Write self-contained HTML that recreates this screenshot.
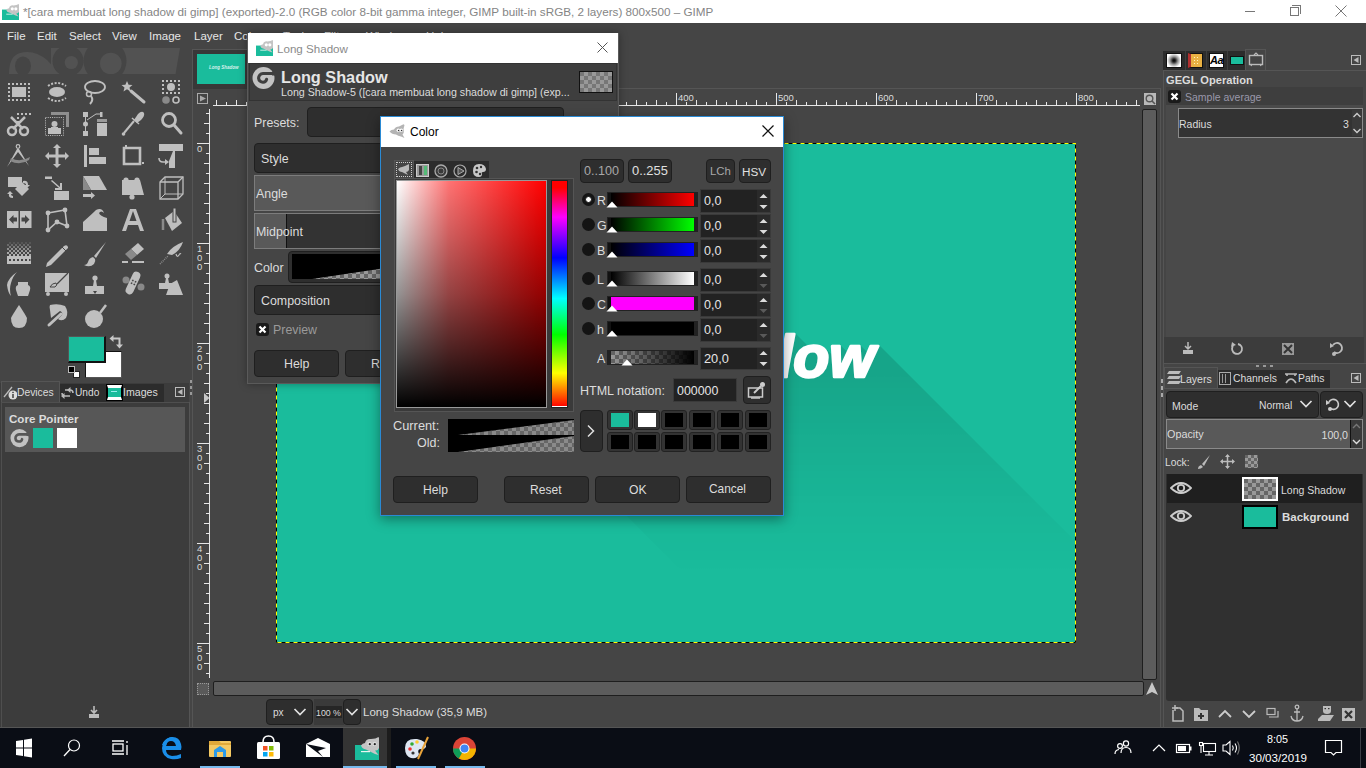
<!DOCTYPE html>
<html><head><meta charset="utf-8">
<style>
*{margin:0;padding:0;box-sizing:border-box}
html,body{width:1366px;height:768px;overflow:hidden;background:#454545;font-family:"Liberation Sans",sans-serif;font-size:12px;color:#dcdcdc}
.a{position:absolute}
.t{position:absolute;white-space:nowrap;line-height:1}
.chk{background-color:#666;background-image:linear-gradient(45deg,#999 25%,transparent 25%,transparent 75%,#999 75%),linear-gradient(45deg,#999 25%,transparent 25%,transparent 75%,#999 75%);background-size:8px 8px;background-position:0 0,4px 4px}
.btn{position:absolute;background:#2c2c2c;border:1px solid #1f1f1f;border-radius:4px}
</style></head><body>
<!-- ============ TITLE + MENU ============ -->
<div class="a" style="left:0px;top:0px;width:1366px;height:23px;background:#fff"></div>
<svg class="a" style="left:2px;top:4px" width="17" height="16" viewBox="0 0 24 23" preserveAspectRatio="none"><rect x="0" y="8" width="24" height="15" fill="#1abc9c"/><path d="M6 8.5 Q7.5 6 10 6 Q11 1.5 16 2 Q21 2 23.5 0 L24 1 V11 Q23 14 20 13.5 L23.5 18 L20 17 Q15 14.5 11 12.5 Q7 12 6 8.5Z" fill="#c4c4c4"/><circle cx="14.5" cy="7" r="2.2" fill="#fff"/><circle cx="19.5" cy="7" r="2.2" fill="#fff"/><rect x="6" y="14" width="9" height="1.2" fill="#e8f6f2"/></svg>
<div class="t" style="left:23px;top:6.20px;font-size:11.7px;color:#858585">*[cara membuat long shadow di gimp] (exported)-2.0 (RGB color 8-bit gamma integer, GIMP built-in sRGB, 2 layers) 800x500 – GIMP</div>
<div class="a" style="left:1245px;top:11px;width:10px;height:1px;background:#777"></div>
<div class="a" style="left:1290px;top:7px;width:9px;height:9px;border:1px solid #777;background:#fff"></div>
<div class="a" style="left:1292px;top:5px;width:9px;height:9px;border-top:1px solid #777;border-right:1px solid #777"></div>
<svg class="a" style="left:1335px;top:5px" width="12" height="12"><path d="M0.5 0.5 L11.5 11.5 M11.5 0.5 L0.5 11.5" stroke="#777" stroke-width="1"/></svg>
<div class="a" style="left:0px;top:23px;width:1366px;height:25px;background:#454545"></div>
<div class="t" style="left:7px;top:30.67px;font-size:11.5px;color:#e6e6e6">File</div>
<div class="t" style="left:37px;top:30.67px;font-size:11.5px;color:#e6e6e6">Edit</div>
<div class="t" style="left:69px;top:30.67px;font-size:11.5px;color:#e6e6e6">Select</div>
<div class="t" style="left:112px;top:30.67px;font-size:11.5px;color:#e6e6e6">View</div>
<div class="t" style="left:149px;top:30.67px;font-size:11.5px;color:#e6e6e6">Image</div>
<div class="t" style="left:194px;top:30.67px;font-size:11.5px;color:#e6e6e6">Layer</div>
<div class="t" style="left:234px;top:30.67px;font-size:11.5px;color:#e6e6e6">Colors</div>
<div class="t" style="left:283px;top:30.67px;font-size:11.5px;color:#e6e6e6">Tools</div>
<div class="t" style="left:324px;top:30.67px;font-size:11.5px;color:#e6e6e6">Filters</div>
<div class="t" style="left:366px;top:30.67px;font-size:11.5px;color:#e6e6e6">Windows</div>
<div class="t" style="left:426px;top:30.67px;font-size:11.5px;color:#e6e6e6">Help</div>
<!-- ============ TOOLBOX ============ -->
<div class="a" style="left:0;top:48px;width:189px;height:335px;background:#454545"></div>
<svg class="a" style="left:0;top:0" width="190" height="400" viewBox="0 0 190 400">
<defs><clipPath id="wm"><rect x="0" y="48" width="190" height="26"/></clipPath></defs>
<g clip-path="url(#wm)" fill="#525252">
 <path d="M51 48 H180 L175.5 74 H51Z"/>
 <path d="M9 74 Q9 56 20 53 Q34 49 47 60 L60 74Z"/>
 <ellipse cx="23" cy="66" rx="8" ry="9.5" fill="#454545"/>
 <circle cx="68" cy="61" r="15.5" fill="#454545"/>
 <circle cx="105" cy="61" r="21.5" fill="#454545"/>
 <circle cx="71.3" cy="62.5" r="6.6"/>
 <circle cx="110.8" cy="63.5" r="10.8"/>
</g>
<g fill="#bfbfbf" stroke="none">
 <!-- r1 c1 rect select -->
 <g><path d="M8 83h2v2h-2zM12 83h2v2h-2zM16 83h2v2h-2zM20 83h2v2h-2zM24 83h2v2h-2zM28 83h2v2h-2zM8 99h2v2h-2zM12 99h2v2h-2zM16 99h2v2h-2zM20 99h2v2h-2zM24 99h2v2h-2zM28 99h2v2h-2zM8 87h2v2h-2zM8 91h2v2h-2zM8 95h2v2h-2zM28 87h2v2h-2zM28 91h2v2h-2zM28 95h2v2h-2z"/><rect x="12" y="87" width="14" height="10"/></g>
 <!-- r1 c2 ellipse -->
 <ellipse cx="57" cy="92" rx="8" ry="5"/>
 <path d="M48 86 Q57 80 66 86" fill="none" stroke="#bfbfbf" stroke-width="2" stroke-dasharray="2 1.6"/>
 <path d="M48 98 Q57 104 66 98" fill="none" stroke="#bfbfbf" stroke-width="2" stroke-dasharray="2 1.6"/>
 <!-- r1 c3 lasso -->
 <ellipse cx="95" cy="87" rx="10" ry="6" fill="none" stroke="#bfbfbf" stroke-width="1.8"/>
 <circle cx="89" cy="94" r="2.5" fill="none" stroke="#bfbfbf" stroke-width="1.5"/>
 <path d="M91 96 Q94 100 90 104" fill="none" stroke="#bfbfbf" stroke-width="2"/>
 <!-- r1 c4 wand -->
 <path d="M127 81 L128.6 84.8 L132.5 85 L129.5 87.5 L130.5 91.5 L127 89.3 L123.5 91.5 L124.5 87.5 L121.5 85 L125.4 84.8Z"/>
 <path d="M131 91 L144 102" stroke="#bfbfbf" stroke-width="3" stroke-linecap="round"/>
 <!-- r1 c5 fuzzy select -->
 <path d="M162 80h2v2h-2zM166 80h2v2h-2zM170 80h2v2h-2zM174 80h2v2h-2zM178 80h2v2h-2zM162 92h2v2h-2zM166 92h2v2h-2zM170 92h2v2h-2zM174 92h2v2h-2zM178 92h2v2h-2zM162 84h2v2h-2zM162 88h2v2h-2zM178 84h2v2h-2zM178 88h2v2h-2z"/>
 <circle cx="171" cy="87" r="4"/>
 <circle cx="166" cy="100" r="3.8" fill="#8a8a8a"/>
 <circle cx="176" cy="100" r="3" fill="none" stroke="#bfbfbf" stroke-width="1.6"/>
 <!-- r2 c1 scissors -->
 <circle cx="12" cy="131" r="4" fill="none" stroke="#bfbfbf" stroke-width="2.5"/>
 <circle cx="24" cy="131" r="4" fill="none" stroke="#bfbfbf" stroke-width="2.5"/>
 <path d="M11 117 L23 129 M25 117 L13 129" stroke="#bfbfbf" stroke-width="2.5"/>
 <path d="M17 113h2v2h-2zM21 113h2v2h-2zM25 113h2v2h-2zM29 113h2v2h-2zM17 117h2v2h-2zM17 121h2v2h-2z"/>
 <!-- r2 c2 foreground select -->
 <path d="M51 112h18v15h-3v-12h-15z" fill="#8f8f8f"/>
 <rect x="45.5" y="117.5" width="18" height="18" fill="none" stroke="#bfbfbf" stroke-width="1" stroke-dasharray="1 1.2"/>
 <circle cx="54.5" cy="124" r="3"/>
 <path d="M48 128h3v-1h7v1h3v6h-13z"/>
 <!-- r2 c3 paths tool -->
 <rect x="83" y="112" width="5" height="5"/><rect x="83" y="131" width="5" height="5"/>
 <circle cx="85.5" cy="124" r="2.5"/>
 <path d="M85.5 114 V134" stroke="#bfbfbf" stroke-width="1"/>
 <path d="M87 120 L96 114 H101" fill="none" stroke="#bfbfbf" stroke-width="1"/>
 <rect x="100" y="112" width="2.5" height="5"/>
 <rect x="97" y="119" width="10" height="3" fill="#9a9a9a"/>
 <rect x="97" y="123" width="10" height="13"/>
 <!-- r2 c4 color picker -->
 <path d="M124 133 L134 121" stroke="#bfbfbf" stroke-width="2"/>
 <path d="M138 114 Q142 110 144 113 Q145 116 141 120 L137 123 L134 120Z"/>
 <path d="M132 118 L139 124" stroke="#bfbfbf" stroke-width="1.5"/>
 <circle cx="123.5" cy="134" r="1.8"/>
 <!-- r2 c5 zoom -->
 <circle cx="169" cy="120" r="6.5" fill="none" stroke="#bfbfbf" stroke-width="2.8"/>
 <path d="M174 125 L181 133" stroke="#bfbfbf" stroke-width="3" stroke-linecap="round"/>
 <!-- r3 c1 measure -->
 <circle cx="18" cy="146.5" r="1.8" fill="none" stroke="#bfbfbf" stroke-width="1.2"/>
 <path d="M17 149 L7 167 L18 152 L29 166 L19 149Z"/>
 <path d="M11 158 Q20 163 30 157 L29 160 Q20 166 10 161Z" fill="#8a8a8a"/>
 <!-- r3 c2 move -->
 <path d="M57 144 L61 148 H58.5 V154.5 H65 V152 L69 156 L65 160 V157.5 H58.5 V164 H61 L57 168 L53 164 H55.5 V157.5 H49 V160 L45 156 L49 152 V154.5 H55.5 V148 H53Z"/>
 <!-- r3 c3 align -->
 <rect x="84" y="145" width="3" height="22"/><rect x="89" y="148" width="10" height="7"/><rect x="89" y="157" width="17" height="7"/>
 <!-- r3 c4 crop -->
 <path d="M124 148h16v16h-16z" fill="none" stroke="#bfbfbf" stroke-width="2.6"/>
 <rect x="125" y="145" width="2" height="2"/><rect x="142" y="162" width="2" height="2"/>
 <!-- r3 c5 perspective -->
 <path d="M159 144 H183 V151 H175 V168 H169 V161 L173 151 H159Z"/>
 <path d="M159 158 Q159 162 163 162 H166" fill="none" stroke="#bfbfbf" stroke-width="1.6"/><path d="M165 159 L169 162 L165 165Z"/>
 <!-- r4 c1 unified -->
 <rect x="8" y="177" width="14" height="10"/>
 <path d="M22 182 L29 189 L22 196 L15 189Z"/>
 <path d="M23 181 Q28 180 28 185 L30 185 L27 188 L24 185 L26 185 Q26 183 23 183Z"/>
 <path d="M13 198 Q8 198 9 194 L7 194 L10 191 L13 194 L11 194 Q11 196 13 196Z"/>
 <!-- r4 c2 scale -->
 <rect x="45" y="176.5" width="7" height="2.5"/>
 <path d="M52 180 L60 187 V183 H62 V190 H55 V188 H59 L51 181Z"/>
 <rect x="54" y="191" width="15" height="9"/>
 <!-- r4 c3 shear -->
 <path d="M83 176 H99 L107 190 H91Z"/>
 <path d="M83 176 L91 190 H83Z" fill="#8a8a8a"/>
 <path d="M83 194 H91 V192 L95 195.5 L91 199 V197 H83Z"/>
 <!-- r4 c4 cage -->
 <path d="M122 180 H140 L144 195 H122Z"/>
 <circle cx="126" cy="180" r="2.6"/><circle cx="137" cy="180" r="2.6"/><circle cx="132" cy="197" r="2.6"/>
 <!-- r4 c5 3d cube -->
 <g fill="none" stroke="#bfbfbf" stroke-width="1.3"><path d="M160 182 L165 177 H183 V194 L178 199 H160Z"/><path d="M160 182 H178 V199 M178 182 L183 177"/><path d="M165 177 V194 H183 M165 194 L160 199" stroke-width="1"/></g>
 <!-- r5 c1 flip -->
 <rect x="7" y="211" width="11.5" height="17"/><rect x="20" y="211" width="11.5" height="17"/>
 <path d="M9 219.5 L13.5 215 V217.5 H17 V221.5 H13.5 V224Z M29.5 219.5 L25 215 V217.5 H21.5 V221.5 H25 V224Z" fill="#454545"/>
<!-- r5 c2 cage -->
 <path d="M48 213 L65 210 L67 226 L57 222 L48 230Z" fill="none" stroke="#bfbfbf" stroke-width="1.6"/>
 <circle cx="48" cy="213" r="2.4"/><circle cx="65" cy="210" r="2.4"/><circle cx="67" cy="226" r="2.4"/><circle cx="57" cy="222" r="2.4"/><circle cx="48" cy="230" r="2.4"/>
 <!-- r5 c3 warp -->
 <path d="M83 222 Q92 214 96 210 Q102 207 104 213 Q101 210 99 213 Q100 216 107 218 V231 H83Z"/>
 <!-- r5 c4 text -->
 <path d="M122 231 L130 209 H136 L144 231 H140 L138 225 H128 L126 231Z M129.5 221 H136.5 L133 211Z"/>
 <!-- r5 c5 bucket -->
 <path d="M165 218 L174 211 L182 223 L172 231Z"/>
 <rect x="173" y="208" width="3" height="14" fill="#bfbfbf" stroke="#454545" stroke-width="1"/>
 <path d="M163 219 V230" stroke="#8a8a8a" stroke-width="2.5"/>
 <!-- r6 c1 gradient -->
<g><rect x="9" y="242" width="2" height="2" fill-opacity="0.15"/><rect x="13" y="242" width="2" height="2" fill-opacity="0.15"/><rect x="17" y="242" width="2" height="2" fill-opacity="0.15"/><rect x="21" y="242" width="2" height="2" fill-opacity="0.15"/><rect x="25" y="242" width="2" height="2" fill-opacity="0.15"/><rect x="29" y="242" width="2" height="2" fill-opacity="0.15"/><rect x="7" y="244" width="2" height="2" fill-opacity="0.30"/><rect x="11" y="244" width="2" height="2" fill-opacity="0.30"/><rect x="15" y="244" width="2" height="2" fill-opacity="0.30"/><rect x="19" y="244" width="2" height="2" fill-opacity="0.30"/><rect x="23" y="244" width="2" height="2" fill-opacity="0.30"/><rect x="27" y="244" width="2" height="2" fill-opacity="0.30"/><rect x="9" y="246" width="2" height="2" fill-opacity="0.45"/><rect x="13" y="246" width="2" height="2" fill-opacity="0.45"/><rect x="17" y="246" width="2" height="2" fill-opacity="0.45"/><rect x="21" y="246" width="2" height="2" fill-opacity="0.45"/><rect x="25" y="246" width="2" height="2" fill-opacity="0.45"/><rect x="29" y="246" width="2" height="2" fill-opacity="0.45"/><rect x="7" y="248" width="2" height="2" fill-opacity="0.60"/><rect x="11" y="248" width="2" height="2" fill-opacity="0.60"/><rect x="15" y="248" width="2" height="2" fill-opacity="0.60"/><rect x="19" y="248" width="2" height="2" fill-opacity="0.60"/><rect x="23" y="248" width="2" height="2" fill-opacity="0.60"/><rect x="27" y="248" width="2" height="2" fill-opacity="0.60"/><rect x="9" y="250" width="2" height="2" fill-opacity="0.70"/><rect x="13" y="250" width="2" height="2" fill-opacity="0.70"/><rect x="17" y="250" width="2" height="2" fill-opacity="0.70"/><rect x="21" y="250" width="2" height="2" fill-opacity="0.70"/><rect x="25" y="250" width="2" height="2" fill-opacity="0.70"/><rect x="29" y="250" width="2" height="2" fill-opacity="0.70"/><rect x="7" y="252" width="2" height="2" fill-opacity="0.80"/><rect x="11" y="252" width="2" height="2" fill-opacity="0.80"/><rect x="15" y="252" width="2" height="2" fill-opacity="0.80"/><rect x="19" y="252" width="2" height="2" fill-opacity="0.80"/><rect x="23" y="252" width="2" height="2" fill-opacity="0.80"/><rect x="27" y="252" width="2" height="2" fill-opacity="0.80"/><rect x="9" y="254" width="2" height="2" fill-opacity="0.90"/><rect x="13" y="254" width="2" height="2" fill-opacity="0.90"/><rect x="17" y="254" width="2" height="2" fill-opacity="0.90"/><rect x="21" y="254" width="2" height="2" fill-opacity="0.90"/><rect x="25" y="254" width="2" height="2" fill-opacity="0.90"/><rect x="29" y="254" width="2" height="2" fill-opacity="0.90"/><rect x="7" y="256" width="2" height="2" fill-opacity="1.00"/><rect x="9" y="256" width="2" height="2" fill-opacity="1.00"/><rect x="11" y="256" width="2" height="2" fill-opacity="1.00"/><rect x="13" y="256" width="2" height="2" fill-opacity="1.00"/><rect x="15" y="256" width="2" height="2" fill-opacity="1.00"/><rect x="17" y="256" width="2" height="2" fill-opacity="1.00"/><rect x="19" y="256" width="2" height="2" fill-opacity="1.00"/><rect x="21" y="256" width="2" height="2" fill-opacity="1.00"/><rect x="23" y="256" width="2" height="2" fill-opacity="1.00"/><rect x="25" y="256" width="2" height="2" fill-opacity="1.00"/><rect x="27" y="256" width="2" height="2" fill-opacity="1.00"/><rect x="29" y="256" width="2" height="2" fill-opacity="1.00"/><rect x="7" y="258" width="24" height="6"/></g>
<path d="M9 259h2v2h-2zM13 259h2v2h-2zM17 259h2v2h-2zM21 259h2v2h-2zM25 259h2v2h-2zM29 259h1.5v2h-1.5z" fill="#454545"/>
<!-- r6 c2 pencil -->
 <path d="M47 263 L64 246 Q67 244 68 247 L68 248 L51 265 L46 267Z"/>
 <path d="M62 247 L67 252" stroke="#454545" stroke-width="1"/>
 <!-- r6 c3 brush -->
 <path d="M106 242 L96 258 L94 256Z"/>
 <path d="M93 257 Q89 258 88 262 Q87 265 84 265 Q90 268 94 264 Q96 261 95 259Z"/>
 <!-- r6 c4 eraser -->
 <path d="M131 249 L138 243 L144 249 L137 255Z"/>
 <path d="M125 254 L131 249 L137 255 L131 260Z" fill="#8a8a8a"/>
 <rect x="122" y="261" width="6" height="2"/><rect x="132" y="261" width="12" height="2"/>
 <!-- r6 c5 airbrush -->
 <path d="M167 254 Q172 246 183 242 Q180 251 172 255Z"/>
 <path d="M176 254 Q177 258 179 255 Q180 253 181 254" fill="none" stroke="#bfbfbf" stroke-width="1.2"/>
 <path d="M160 264 L168 256" stroke="#8a8a8a" stroke-width="1.5" stroke-dasharray="1 1"/>
 <!-- r7 c1 ink -->
 <path d="M17 272 Q8 278 7 285 Q8 293 11 296 Q9 289 11 283 Q13 276 17 272Z"/>
 <path d="M18 282 H28 V285 Q31 286 30 290 L28 296 H18 L16 290 Q15 286 18 285Z"/>
 <!-- r7 c2 mypaint -->
 <rect x="45" y="273" width="24" height="19"/>
 <circle cx="48" cy="294" r="2"/><circle cx="66" cy="294" r="2"/>
 <path d="M68 273 L57 284" stroke="#454545" stroke-width="1.2"/>
 <path d="M50 287 Q52 283 56 283 Q58 285 55 287Z" fill="none" stroke="#454545" stroke-width="1"/>
 <!-- r7 c3 clone -->
 <circle cx="95" cy="278" r="2.6"/><path d="M94 280 H96 L97 286 H104 V294 H85 V286 H93Z"/>
 <path d="M93 291 L97 291 L95 294Z" fill="#454545"/>
 <!-- r7 c4 heal -->
 <circle cx="126" cy="280" r="3.5" fill="#888"/><circle cx="141" cy="287" r="3.5" fill="#888"/>
 <rect x="129" y="271" width="8" height="24" rx="4" transform="rotate(25 133 283)"/>
 <g fill="#454545" transform="rotate(25 133 283)"><rect x="131" y="280" width="1.6" height="1.6"/><rect x="134" y="280" width="1.6" height="1.6"/><rect x="131" y="283" width="1.6" height="1.6"/><rect x="134" y="283" width="1.6" height="1.6"/></g>
<!-- r7 c5 perspective clone -->
 <circle cx="167" cy="276" r="2.5"/><path d="M166 278 H168 L169 283 H175 V289 H159 V283 H165Z"/>
 <path d="M170 284 L177 280 L183 295 H166Z"/>
 <!-- r8 c1 blur -->
 <path d="M19 305 Q13 314 11 318 Q11 328 19 328 Q27 328 27 318 Q25 314 19 305Z"/>
 <!-- r8 c2 smudge -->
 <path d="M50 305 Q58 303 65 306 Q69 312 66 318 Q62 322 58 319 L62 315 Q63 312 60 311 L51 318 L50 310Q49 307 50 305Z"/>
 <path d="M49 325 L61 314" stroke="#bfbfbf" stroke-width="3" stroke-linecap="round"/>
 <!-- r8 c3 dodge -->
 <circle cx="94" cy="319" r="9"/>
 <path d="M100 313 L106 305" stroke="#bfbfbf" stroke-width="2.5"/>
</g>
</svg>
<!-- FG/BG colors -->
<div class="a" style="left:85px;top:351px;width:37px;height:27px;background:#fff;border:1px solid #555;border-left:1px solid #111;border-top:1px solid #111"></div>
<div class="a" style="left:68px;top:336px;width:38px;height:27px;background:#1abc9c;border:1px solid #555;border-right:2px solid #111;border-bottom:2px solid #111"></div>
<svg class="a" style="left:109px;top:335px" width="16" height="16" viewBox="0 0 16 16"><path d="M4 3.5 H10.5 V10" fill="none" stroke="#c8c8c8" stroke-width="2"/><path d="M0.5 3.5 L4.5 0 V7Z M10.5 13.5 L7 9.5 H14Z" fill="#c8c8c8"/></svg>
<div class="a" style="left:73px;top:371px;width:7px;height:7px;background:#fff;border:1px solid #222"></div>
<div class="a" style="left:68px;top:366px;width:7px;height:7px;background:#000;border:1px solid #bbb"></div>
<!-- dock tabs -->
<div class="a" style="left:0;top:383px;width:189px;height:345px;background:#3c3c3c"></div>
<div class="a" style="left:60px;top:384px;width:104px;height:18px;background:#2c2c2c"></div>
<div class="a" style="left:1px;top:381px;width:59px;height:22px;background:#454545;border:1px solid #555;border-bottom:none"></div>
<div class="t" style="left:17px;top:387.68px;font-size:10.3px;color:#dcdcdc">Devices</div>
<svg class="a" style="left:3px;top:385px" width="14" height="15"><path d="M1 12 L9 2" stroke="#bbb" stroke-width="1.3"/><circle cx="10" cy="10" r="4.5" fill="#ddd"/><rect x="9.3" y="9" width="1.4" height="4" fill="#333"/><rect x="9.3" y="6.8" width="1.4" height="1.3" fill="#333"/></svg>
<svg class="a" style="left:61px;top:386px" width="13" height="13"><path d="M4 4 H9 Q12 4 12 7 M9 10 H4 Q1 10 1 7" fill="none" stroke="#bbb" stroke-width="1.5"/><path d="M9.5 1 V7 L6 4Z M3.5 7 V13 L0 10Z" fill="#bbb" transform="translate(0,0)"/></svg>
<div class="t" style="left:75px;top:387.77px;font-size:10.2px;color:#dcdcdc">Undo</div>
<div class="a" style="left:107px;top:385px;width:15px;height:15px;background:#1abc9c;border:1px solid #000;border-top:3px solid #fff;border-bottom:3px solid #fff;outline:1px solid #000"></div>
<div class="a" style="left:111px;top:391px;width:6px;height:1px;background:#9ee"></div>
<div class="t" style="left:123px;top:387.43px;font-size:10.6px;color:#dcdcdc">Images</div>
<div class="a" style="left:175px;top:387px;width:10px;height:10px;border:1px solid #bbb"></div>
<svg class="a" style="left:175px;top:387px" width="10" height="10"><path d="M7.5 2 V8 L2.5 5Z" fill="#bbb"/></svg>
<div class="a" style="left:1px;top:402px;width:188px;height:326px;border:1px solid #4f4f4f;border-right:none;border-bottom:none"></div>
<div class="a" style="left:5px;top:407px;width:180px;height:45px;background:#575757"></div>
<div class="t" style="left:9px;top:412.58px;font-size:11.6px;color:#dcdcdc;font-weight:bold">Core Pointer</div>
<svg class="a" style="left:10px;top:429px" width="19" height="19" viewBox="0 0 23 23"><circle cx="11.5" cy="11" r="11" fill="#c2c2c2"/><path d="M24 6.5 H11 A4.6 4.6 0 0 0 6.6 11.3 A4.3 4.3 0 0 0 11 15.2 A3.6 3.6 0 0 0 14.6 12.3" fill="none" stroke="#575757" stroke-width="3.1" stroke-linecap="round"/><rect x="20" y="4.5" width="5" height="4" fill="#575757"/></svg>
<div class="a" style="left:33px;top:428px;width:20px;height:20px;background:#1abc9c"></div>
<div class="a" style="left:57px;top:428px;width:20px;height:20px;background:#fff"></div>
<svg class="a" style="left:87px;top:705px" width="14" height="14"><path d="M7 1 V7 M4 5 L7 8 L10 5" fill="none" stroke="#bbb" stroke-width="1.6"/><rect x="2" y="9" width="10" height="4" fill="#bbb"/></svg>

<!-- ============ IMAGE WINDOW ============ -->
<div class="a" style="left:189px;top:402px;width:1px;height:325px;background:#555"></div>
<div class="a" style="left:192px;top:49px;width:1px;height:678px;background:#555"></div>
<div class="a" style="left:192px;top:49px;width:60px;height:1px;background:#555"></div>
<div class="a" style="left:193px;top:50px;width:60px;height:39px;background:#383838"></div>
<div class="a" style="left:250px;top:88px;width:910px;height:1px;background:#555"></div>
<div class="a" style="left:1160px;top:88px;width:1px;height:639px;background:#555"></div>
<div class="a" style="left:197px;top:54px;width:48px;height:30px;background:#1abc9c"></div>
<div class="t" style="left:209px;top:66px;font-size:4.5px;font-weight:bold;font-style:italic;color:#d8f0ea">Long Shadow</div>
<!-- navigate origin -->
<div class="a" style="left:197px;top:93px;width:11px;height:11px;border:1px solid #aaa"></div>
<svg class="a" style="left:197px;top:93px" width="11" height="11"><path d="M3 2.5 L9 5.5 L3 8.5Z" fill="#aaa"/></svg>
<!-- zoom btn -->
<div class="a" style="left:1144px;top:93px;width:12px;height:12px;background:#b8b8b8"></div>
<svg class="a" style="left:1144px;top:93px" width="12" height="12"><circle cx="5.5" cy="5.5" r="3.3" fill="none" stroke="#555" stroke-width="1.4"/><path d="M8 8 L11 11" stroke="#555" stroke-width="1.6"/></svg>
<!-- v scrollbar -->
<div class="a" style="left:1142px;top:109px;width:15px;height:571px;background:#5c5c5c;border:1px solid #1e1e1e;border-radius:2px"></div>
<!-- h scrollbar -->
<div class="a" style="left:213px;top:681px;width:931px;height:15px;background:#5c5c5c;border:1px solid #1e1e1e;border-radius:2px"></div>
<!-- quick mask -->
<div class="a" style="left:197px;top:683px;width:12px;height:12px;background:#5a5a5a;border:1px dotted #999"></div>
<!-- navigate -->
<svg class="a" style="left:1145px;top:681px" width="14" height="15"><path d="M7 1 L13 14 L7 11 L1 14Z" fill="#c8c8c8"/></svg>
<!-- status bar -->

<div class="btn" style="left:266px;top:699px;width:47px;height:26px;background:#2e2e2e"></div>
<div class="t" style="left:273px;top:708.05px;font-size:10.1px;color:#dcdcdc">px</div>
<svg class="a" style="left:293px;top:707px" width="14" height="10"><path d="M1.5 2 L7 7.5 L12.5 2" fill="none" stroke="#e0e0e0" stroke-width="1.7"/></svg>
<div class="a" style="left:314px;top:699px;width:30px;height:26px;background:#3a3a3a"></div>
<div class="a" style="left:316px;top:706px;width:26px;height:12px;background:#262626"></div>
<div class="t" style="left:316px;top:709.15px;font-size:8.8px;color:#dcdcdc">100 %</div>
<div class="btn" style="left:343px;top:699px;width:18px;height:26px;background:#2e2e2e"></div>
<svg class="a" style="left:345px;top:707px" width="14" height="10"><path d="M1.5 2 L7 7.5 L12.5 2" fill="none" stroke="#e0e0e0" stroke-width="1.7"/></svg>
<div class="t" style="left:363px;top:706.87px;font-size:11.5px;color:#dcdcdc">Long Shadow (35,9 MB)</div>
<!-- canvas -->
<div class="a" style="left:276px;top:143px;width:800px;height:500px;background:#1abc9c;overflow:hidden">
<svg class="a" style="left:0;top:0" width="800" height="500" viewBox="0 0 800 500">
<defs>
<linearGradient id="shfade" gradientUnits="userSpaceOnUse" x1="0" y1="225" x2="0" y2="430"><stop offset="0" stop-color="#fff"/><stop offset="0.35" stop-color="#999"/><stop offset="0.7" stop-color="#3a3a3a"/><stop offset="1" stop-color="#000"/></linearGradient>
<mask id="shmask" maskUnits="userSpaceOnUse" x="0" y="0" width="800" height="500"><rect width="800" height="500" fill="url(#shfade)"/></mask>
</defs>
<g font-family="Liberation Sans" font-weight="bold" font-style="italic" font-size="59" stroke-width="2.6" stroke-linejoin="round">
<g mask="url(#shmask)"><g opacity="0.12" fill="#000" stroke="#000"><text x="213.5" y="234.5">Long Shadow</text><text x="214.5" y="235.5">Long Shadow</text><text x="215.5" y="236.5">Long Shadow</text><text x="216.5" y="237.5">Long Shadow</text><text x="217.5" y="238.5">Long Shadow</text><text x="218.5" y="239.5">Long Shadow</text><text x="219.5" y="240.5">Long Shadow</text><text x="220.5" y="241.5">Long Shadow</text><text x="221.5" y="242.5">Long Shadow</text><text x="222.5" y="243.5">Long Shadow</text><text x="223.5" y="244.5">Long Shadow</text><text x="224.5" y="245.5">Long Shadow</text><text x="225.5" y="246.5">Long Shadow</text><text x="226.5" y="247.5">Long Shadow</text><text x="227.5" y="248.5">Long Shadow</text><text x="228.5" y="249.5">Long Shadow</text><text x="229.5" y="250.5">Long Shadow</text><text x="230.5" y="251.5">Long Shadow</text><text x="231.5" y="252.5">Long Shadow</text><text x="232.5" y="253.5">Long Shadow</text><text x="233.5" y="254.5">Long Shadow</text><text x="234.5" y="255.5">Long Shadow</text><text x="235.5" y="256.5">Long Shadow</text><text x="236.5" y="257.5">Long Shadow</text><text x="237.5" y="258.5">Long Shadow</text><text x="238.5" y="259.5">Long Shadow</text><text x="239.5" y="260.5">Long Shadow</text><text x="240.5" y="261.5">Long Shadow</text><text x="241.5" y="262.5">Long Shadow</text><text x="242.5" y="263.5">Long Shadow</text><text x="243.5" y="264.5">Long Shadow</text><text x="244.5" y="265.5">Long Shadow</text><text x="245.5" y="266.5">Long Shadow</text><text x="246.5" y="267.5">Long Shadow</text><text x="247.5" y="268.5">Long Shadow</text><text x="248.5" y="269.5">Long Shadow</text><text x="249.5" y="270.5">Long Shadow</text><text x="250.5" y="271.5">Long Shadow</text><text x="251.5" y="272.5">Long Shadow</text><text x="252.5" y="273.5">Long Shadow</text><text x="253.5" y="274.5">Long Shadow</text><text x="254.5" y="275.5">Long Shadow</text><text x="255.5" y="276.5">Long Shadow</text><text x="256.5" y="277.5">Long Shadow</text><text x="257.5" y="278.5">Long Shadow</text><text x="258.5" y="279.5">Long Shadow</text><text x="259.5" y="280.5">Long Shadow</text><text x="260.5" y="281.5">Long Shadow</text><text x="261.5" y="282.5">Long Shadow</text><text x="262.5" y="283.5">Long Shadow</text><text x="263.5" y="284.5">Long Shadow</text><text x="264.5" y="285.5">Long Shadow</text><text x="265.5" y="286.5">Long Shadow</text><text x="266.5" y="287.5">Long Shadow</text><text x="267.5" y="288.5">Long Shadow</text><text x="268.5" y="289.5">Long Shadow</text><text x="269.5" y="290.5">Long Shadow</text><text x="270.5" y="291.5">Long Shadow</text><text x="271.5" y="292.5">Long Shadow</text><text x="272.5" y="293.5">Long Shadow</text><text x="273.5" y="294.5">Long Shadow</text><text x="274.5" y="295.5">Long Shadow</text><text x="275.5" y="296.5">Long Shadow</text><text x="276.5" y="297.5">Long Shadow</text><text x="277.5" y="298.5">Long Shadow</text><text x="278.5" y="299.5">Long Shadow</text><text x="279.5" y="300.5">Long Shadow</text><text x="280.5" y="301.5">Long Shadow</text><text x="281.5" y="302.5">Long Shadow</text><text x="282.5" y="303.5">Long Shadow</text><text x="283.5" y="304.5">Long Shadow</text><text x="284.5" y="305.5">Long Shadow</text><text x="285.5" y="306.5">Long Shadow</text><text x="286.5" y="307.5">Long Shadow</text><text x="287.5" y="308.5">Long Shadow</text><text x="288.5" y="309.5">Long Shadow</text><text x="289.5" y="310.5">Long Shadow</text><text x="290.5" y="311.5">Long Shadow</text><text x="291.5" y="312.5">Long Shadow</text><text x="292.5" y="313.5">Long Shadow</text><text x="293.5" y="314.5">Long Shadow</text><text x="294.5" y="315.5">Long Shadow</text><text x="295.5" y="316.5">Long Shadow</text><text x="296.5" y="317.5">Long Shadow</text><text x="297.5" y="318.5">Long Shadow</text><text x="298.5" y="319.5">Long Shadow</text><text x="299.5" y="320.5">Long Shadow</text><text x="300.5" y="321.5">Long Shadow</text><text x="301.5" y="322.5">Long Shadow</text><text x="302.5" y="323.5">Long Shadow</text><text x="303.5" y="324.5">Long Shadow</text><text x="304.5" y="325.5">Long Shadow</text><text x="305.5" y="326.5">Long Shadow</text><text x="306.5" y="327.5">Long Shadow</text><text x="307.5" y="328.5">Long Shadow</text><text x="308.5" y="329.5">Long Shadow</text><text x="309.5" y="330.5">Long Shadow</text><text x="310.5" y="331.5">Long Shadow</text><text x="311.5" y="332.5">Long Shadow</text><text x="312.5" y="333.5">Long Shadow</text><text x="313.5" y="334.5">Long Shadow</text><text x="314.5" y="335.5">Long Shadow</text><text x="315.5" y="336.5">Long Shadow</text><text x="316.5" y="337.5">Long Shadow</text><text x="317.5" y="338.5">Long Shadow</text><text x="318.5" y="339.5">Long Shadow</text><text x="319.5" y="340.5">Long Shadow</text><text x="320.5" y="341.5">Long Shadow</text><text x="321.5" y="342.5">Long Shadow</text><text x="322.5" y="343.5">Long Shadow</text><text x="323.5" y="344.5">Long Shadow</text><text x="324.5" y="345.5">Long Shadow</text><text x="325.5" y="346.5">Long Shadow</text><text x="326.5" y="347.5">Long Shadow</text><text x="327.5" y="348.5">Long Shadow</text><text x="328.5" y="349.5">Long Shadow</text><text x="329.5" y="350.5">Long Shadow</text><text x="330.5" y="351.5">Long Shadow</text><text x="331.5" y="352.5">Long Shadow</text><text x="332.5" y="353.5">Long Shadow</text><text x="333.5" y="354.5">Long Shadow</text><text x="334.5" y="355.5">Long Shadow</text><text x="335.5" y="356.5">Long Shadow</text><text x="336.5" y="357.5">Long Shadow</text><text x="337.5" y="358.5">Long Shadow</text><text x="338.5" y="359.5">Long Shadow</text><text x="339.5" y="360.5">Long Shadow</text><text x="340.5" y="361.5">Long Shadow</text><text x="341.5" y="362.5">Long Shadow</text><text x="342.5" y="363.5">Long Shadow</text><text x="343.5" y="364.5">Long Shadow</text><text x="344.5" y="365.5">Long Shadow</text><text x="345.5" y="366.5">Long Shadow</text><text x="346.5" y="367.5">Long Shadow</text><text x="347.5" y="368.5">Long Shadow</text><text x="348.5" y="369.5">Long Shadow</text><text x="349.5" y="370.5">Long Shadow</text><text x="350.5" y="371.5">Long Shadow</text><text x="351.5" y="372.5">Long Shadow</text><text x="352.5" y="373.5">Long Shadow</text><text x="353.5" y="374.5">Long Shadow</text><text x="354.5" y="375.5">Long Shadow</text><text x="355.5" y="376.5">Long Shadow</text><text x="356.5" y="377.5">Long Shadow</text><text x="357.5" y="378.5">Long Shadow</text><text x="358.5" y="379.5">Long Shadow</text><text x="359.5" y="380.5">Long Shadow</text><text x="360.5" y="381.5">Long Shadow</text><text x="361.5" y="382.5">Long Shadow</text><text x="362.5" y="383.5">Long Shadow</text><text x="363.5" y="384.5">Long Shadow</text><text x="364.5" y="385.5">Long Shadow</text><text x="365.5" y="386.5">Long Shadow</text><text x="366.5" y="387.5">Long Shadow</text><text x="367.5" y="388.5">Long Shadow</text><text x="368.5" y="389.5">Long Shadow</text><text x="369.5" y="390.5">Long Shadow</text><text x="370.5" y="391.5">Long Shadow</text><text x="371.5" y="392.5">Long Shadow</text><text x="372.5" y="393.5">Long Shadow</text><text x="373.5" y="394.5">Long Shadow</text><text x="374.5" y="395.5">Long Shadow</text><text x="375.5" y="396.5">Long Shadow</text><text x="376.5" y="397.5">Long Shadow</text><text x="377.5" y="398.5">Long Shadow</text><text x="378.5" y="399.5">Long Shadow</text><text x="379.5" y="400.5">Long Shadow</text><text x="380.5" y="401.5">Long Shadow</text><text x="381.5" y="402.5">Long Shadow</text><text x="382.5" y="403.5">Long Shadow</text><text x="383.5" y="404.5">Long Shadow</text><text x="384.5" y="405.5">Long Shadow</text><text x="385.5" y="406.5">Long Shadow</text><text x="386.5" y="407.5">Long Shadow</text><text x="387.5" y="408.5">Long Shadow</text><text x="388.5" y="409.5">Long Shadow</text><text x="389.5" y="410.5">Long Shadow</text><text x="390.5" y="411.5">Long Shadow</text><text x="391.5" y="412.5">Long Shadow</text><text x="392.5" y="413.5">Long Shadow</text><text x="393.5" y="414.5">Long Shadow</text><text x="394.5" y="415.5">Long Shadow</text><text x="395.5" y="416.5">Long Shadow</text><text x="396.5" y="417.5">Long Shadow</text><text x="397.5" y="418.5">Long Shadow</text><text x="398.5" y="419.5">Long Shadow</text><text x="399.5" y="420.5">Long Shadow</text><text x="400.5" y="421.5">Long Shadow</text><text x="401.5" y="422.5">Long Shadow</text><text x="402.5" y="423.5">Long Shadow</text><text x="403.5" y="424.5">Long Shadow</text><text x="404.5" y="425.5">Long Shadow</text><text x="405.5" y="426.5">Long Shadow</text><text x="406.5" y="427.5">Long Shadow</text><text x="407.5" y="428.5">Long Shadow</text><text x="408.5" y="429.5">Long Shadow</text><text x="409.5" y="430.5">Long Shadow</text><text x="410.5" y="431.5">Long Shadow</text><text x="411.5" y="432.5">Long Shadow</text><text x="412.5" y="433.5">Long Shadow</text><text x="413.5" y="434.5">Long Shadow</text><text x="414.5" y="435.5">Long Shadow</text><text x="415.5" y="436.5">Long Shadow</text><text x="416.5" y="437.5">Long Shadow</text><text x="417.5" y="438.5">Long Shadow</text><text x="418.5" y="439.5">Long Shadow</text><text x="419.5" y="440.5">Long Shadow</text><text x="420.5" y="441.5">Long Shadow</text><text x="421.5" y="442.5">Long Shadow</text><text x="422.5" y="443.5">Long Shadow</text><text x="423.5" y="444.5">Long Shadow</text><text x="424.5" y="445.5">Long Shadow</text><text x="425.5" y="446.5">Long Shadow</text><text x="426.5" y="447.5">Long Shadow</text><text x="427.5" y="448.5">Long Shadow</text><text x="428.5" y="449.5">Long Shadow</text><text x="429.5" y="450.5">Long Shadow</text><text x="430.5" y="451.5">Long Shadow</text><text x="431.5" y="452.5">Long Shadow</text><text x="432.5" y="453.5">Long Shadow</text><text x="433.5" y="454.5">Long Shadow</text><text x="434.5" y="455.5">Long Shadow</text><text x="435.5" y="456.5">Long Shadow</text><text x="436.5" y="457.5">Long Shadow</text><text x="437.5" y="458.5">Long Shadow</text><text x="438.5" y="459.5">Long Shadow</text><text x="439.5" y="460.5">Long Shadow</text><text x="440.5" y="461.5">Long Shadow</text><text x="441.5" y="462.5">Long Shadow</text><text x="442.5" y="463.5">Long Shadow</text><text x="443.5" y="464.5">Long Shadow</text><text x="444.5" y="465.5">Long Shadow</text><text x="445.5" y="466.5">Long Shadow</text><text x="446.5" y="467.5">Long Shadow</text><text x="447.5" y="468.5">Long Shadow</text><text x="448.5" y="469.5">Long Shadow</text><text x="449.5" y="470.5">Long Shadow</text><text x="450.5" y="471.5">Long Shadow</text><text x="451.5" y="472.5">Long Shadow</text><text x="452.5" y="473.5">Long Shadow</text><text x="453.5" y="474.5">Long Shadow</text><text x="454.5" y="475.5">Long Shadow</text><text x="455.5" y="476.5">Long Shadow</text><text x="456.5" y="477.5">Long Shadow</text><text x="457.5" y="478.5">Long Shadow</text><text x="458.5" y="479.5">Long Shadow</text><text x="459.5" y="480.5">Long Shadow</text><text x="460.5" y="481.5">Long Shadow</text><text x="461.5" y="482.5">Long Shadow</text><text x="462.5" y="483.5">Long Shadow</text><text x="463.5" y="484.5">Long Shadow</text><text x="464.5" y="485.5">Long Shadow</text><text x="465.5" y="486.5">Long Shadow</text><text x="466.5" y="487.5">Long Shadow</text><text x="467.5" y="488.5">Long Shadow</text><text x="468.5" y="489.5">Long Shadow</text><text x="469.5" y="490.5">Long Shadow</text><text x="470.5" y="491.5">Long Shadow</text><text x="471.5" y="492.5">Long Shadow</text><text x="472.5" y="493.5">Long Shadow</text><text x="473.5" y="494.5">Long Shadow</text><text x="474.5" y="495.5">Long Shadow</text><text x="475.5" y="496.5">Long Shadow</text><text x="476.5" y="497.5">Long Shadow</text><text x="477.5" y="498.5">Long Shadow</text><text x="478.5" y="499.5">Long Shadow</text><text x="479.5" y="500.5">Long Shadow</text><text x="480.5" y="501.5">Long Shadow</text><text x="481.5" y="502.5">Long Shadow</text><text x="482.5" y="503.5">Long Shadow</text><text x="483.5" y="504.5">Long Shadow</text><text x="484.5" y="505.5">Long Shadow</text><text x="485.5" y="506.5">Long Shadow</text><text x="486.5" y="507.5">Long Shadow</text><text x="487.5" y="508.5">Long Shadow</text><text x="488.5" y="509.5">Long Shadow</text><text x="489.5" y="510.5">Long Shadow</text><text x="490.5" y="511.5">Long Shadow</text><text x="491.5" y="512.5">Long Shadow</text><text x="492.5" y="513.5">Long Shadow</text><text x="493.5" y="514.5">Long Shadow</text><text x="494.5" y="515.5">Long Shadow</text><text x="495.5" y="516.5">Long Shadow</text><text x="496.5" y="517.5">Long Shadow</text><text x="497.5" y="518.5">Long Shadow</text><text x="498.5" y="519.5">Long Shadow</text><text x="499.5" y="520.5">Long Shadow</text><text x="500.5" y="521.5">Long Shadow</text><text x="501.5" y="522.5">Long Shadow</text><text x="502.5" y="523.5">Long Shadow</text><text x="503.5" y="524.5">Long Shadow</text><text x="504.5" y="525.5">Long Shadow</text><text x="505.5" y="526.5">Long Shadow</text><text x="506.5" y="527.5">Long Shadow</text><text x="507.5" y="528.5">Long Shadow</text><text x="508.5" y="529.5">Long Shadow</text><text x="509.5" y="530.5">Long Shadow</text><text x="510.5" y="531.5">Long Shadow</text><text x="511.5" y="532.5">Long Shadow</text><text x="512.5" y="533.5">Long Shadow</text><text x="513.5" y="534.5">Long Shadow</text><text x="514.5" y="535.5">Long Shadow</text><text x="515.5" y="536.5">Long Shadow</text><text x="516.5" y="537.5">Long Shadow</text><text x="517.5" y="538.5">Long Shadow</text><text x="518.5" y="539.5">Long Shadow</text><text x="519.5" y="540.5">Long Shadow</text><text x="520.5" y="541.5">Long Shadow</text><text x="521.5" y="542.5">Long Shadow</text><text x="522.5" y="543.5">Long Shadow</text><text x="523.5" y="544.5">Long Shadow</text><text x="524.5" y="545.5">Long Shadow</text><text x="525.5" y="546.5">Long Shadow</text><text x="526.5" y="547.5">Long Shadow</text><text x="527.5" y="548.5">Long Shadow</text><text x="528.5" y="549.5">Long Shadow</text><text x="529.5" y="550.5">Long Shadow</text><text x="530.5" y="551.5">Long Shadow</text><text x="531.5" y="552.5">Long Shadow</text><text x="532.5" y="553.5">Long Shadow</text><text x="533.5" y="554.5">Long Shadow</text><text x="534.5" y="555.5">Long Shadow</text><text x="535.5" y="556.5">Long Shadow</text><text x="536.5" y="557.5">Long Shadow</text><text x="537.5" y="558.5">Long Shadow</text><text x="538.5" y="559.5">Long Shadow</text><text x="539.5" y="560.5">Long Shadow</text><text x="540.5" y="561.5">Long Shadow</text><text x="541.5" y="562.5">Long Shadow</text><text x="542.5" y="563.5">Long Shadow</text><text x="543.5" y="564.5">Long Shadow</text><text x="544.5" y="565.5">Long Shadow</text><text x="545.5" y="566.5">Long Shadow</text><text x="546.5" y="567.5">Long Shadow</text><text x="547.5" y="568.5">Long Shadow</text><text x="548.5" y="569.5">Long Shadow</text><text x="549.5" y="570.5">Long Shadow</text><text x="550.5" y="571.5">Long Shadow</text><text x="551.5" y="572.5">Long Shadow</text><text x="552.5" y="573.5">Long Shadow</text><text x="553.5" y="574.5">Long Shadow</text><text x="554.5" y="575.5">Long Shadow</text><text x="555.5" y="576.5">Long Shadow</text><text x="556.5" y="577.5">Long Shadow</text><text x="557.5" y="578.5">Long Shadow</text><text x="558.5" y="579.5">Long Shadow</text><text x="559.5" y="580.5">Long Shadow</text><text x="560.5" y="581.5">Long Shadow</text><text x="561.5" y="582.5">Long Shadow</text><text x="562.5" y="583.5">Long Shadow</text><text x="563.5" y="584.5">Long Shadow</text><text x="564.5" y="585.5">Long Shadow</text><text x="565.5" y="586.5">Long Shadow</text><text x="566.5" y="587.5">Long Shadow</text><text x="567.5" y="588.5">Long Shadow</text><text x="568.5" y="589.5">Long Shadow</text><text x="569.5" y="590.5">Long Shadow</text><text x="570.5" y="591.5">Long Shadow</text><text x="571.5" y="592.5">Long Shadow</text><text x="572.5" y="593.5">Long Shadow</text><text x="573.5" y="594.5">Long Shadow</text><text x="574.5" y="595.5">Long Shadow</text><text x="575.5" y="596.5">Long Shadow</text><text x="576.5" y="597.5">Long Shadow</text><text x="577.5" y="598.5">Long Shadow</text><text x="578.5" y="599.5">Long Shadow</text><text x="579.5" y="600.5">Long Shadow</text><text x="580.5" y="601.5">Long Shadow</text><text x="581.5" y="602.5">Long Shadow</text><text x="582.5" y="603.5">Long Shadow</text><text x="583.5" y="604.5">Long Shadow</text><text x="584.5" y="605.5">Long Shadow</text><text x="585.5" y="606.5">Long Shadow</text><text x="586.5" y="607.5">Long Shadow</text><text x="587.5" y="608.5">Long Shadow</text><text x="588.5" y="609.5">Long Shadow</text><text x="589.5" y="610.5">Long Shadow</text><text x="590.5" y="611.5">Long Shadow</text><text x="591.5" y="612.5">Long Shadow</text><text x="592.5" y="613.5">Long Shadow</text><text x="593.5" y="614.5">Long Shadow</text><text x="594.5" y="615.5">Long Shadow</text><text x="595.5" y="616.5">Long Shadow</text><text x="596.5" y="617.5">Long Shadow</text><text x="597.5" y="618.5">Long Shadow</text><text x="598.5" y="619.5">Long Shadow</text><text x="599.5" y="620.5">Long Shadow</text><text x="600.5" y="621.5">Long Shadow</text><text x="601.5" y="622.5">Long Shadow</text><text x="602.5" y="623.5">Long Shadow</text><text x="603.5" y="624.5">Long Shadow</text><text x="604.5" y="625.5">Long Shadow</text><text x="605.5" y="626.5">Long Shadow</text><text x="606.5" y="627.5">Long Shadow</text><text x="607.5" y="628.5">Long Shadow</text><text x="608.5" y="629.5">Long Shadow</text><text x="609.5" y="630.5">Long Shadow</text><text x="610.5" y="631.5">Long Shadow</text><text x="611.5" y="632.5">Long Shadow</text><text x="612.5" y="633.5">Long Shadow</text><text x="613.5" y="634.5">Long Shadow</text><text x="614.5" y="635.5">Long Shadow</text><text x="615.5" y="636.5">Long Shadow</text><text x="616.5" y="637.5">Long Shadow</text><text x="617.5" y="638.5">Long Shadow</text><text x="618.5" y="639.5">Long Shadow</text><text x="619.5" y="640.5">Long Shadow</text><text x="620.5" y="641.5">Long Shadow</text><text x="621.5" y="642.5">Long Shadow</text><text x="622.5" y="643.5">Long Shadow</text><text x="623.5" y="644.5">Long Shadow</text><text x="624.5" y="645.5">Long Shadow</text><text x="625.5" y="646.5">Long Shadow</text><text x="626.5" y="647.5">Long Shadow</text><text x="627.5" y="648.5">Long Shadow</text><text x="628.5" y="649.5">Long Shadow</text><text x="629.5" y="650.5">Long Shadow</text><text x="630.5" y="651.5">Long Shadow</text><text x="631.5" y="652.5">Long Shadow</text></g></g>
<text x="212.5" y="233.5" fill="#fff" stroke="#fff">Long Shadow</text>
</g>
</svg>
</div>
<svg class="a" style="left:276px;top:143px" width="800" height="500"><rect x="0.5" y="0.5" width="799" height="499" fill="none" stroke="#ffff00" stroke-width="1"/><rect x="0.5" y="0.5" width="799" height="499" fill="none" stroke="#000" stroke-width="1" stroke-dasharray="4 4"/></svg>
<svg class="a" style="left:203px;top:392px" width="7" height="12"><path d="M1 1 L6.5 6 L1 11Z" fill="#c8c8c8"/></svg>
<div class="a" style="left:190px;top:380px;width:2px;height:3px;background:#999"></div><div class="a" style="left:190px;top:386px;width:2px;height:3px;background:#999"></div><div class="a" style="left:190px;top:392px;width:2px;height:3px;background:#999"></div>

<svg class="a" style="left:0;top:0" width="1366" height="700" viewBox="0 0 1366 700">
<rect x="213" y="105" width="927" height="1" fill="#e6e6e6"/>
<rect x="209" y="109" width="1" height="569" fill="#e6e6e6"/>
<path fill="#e6e6e6" d="M216 100h1v5h-1zM226 102h1v3h-1zM236 100h1v5h-1zM246 102h1v3h-1zM256 100h1v5h-1zM266 102h1v3h-1zM276 93h1v12h-1zM286 102h1v3h-1zM296 100h1v5h-1zM306 102h1v3h-1zM316 100h1v5h-1zM326 102h1v3h-1zM336 100h1v5h-1zM346 102h1v3h-1zM356 100h1v5h-1zM366 102h1v3h-1zM376 93h1v12h-1zM386 102h1v3h-1zM396 100h1v5h-1zM406 102h1v3h-1zM416 100h1v5h-1zM426 102h1v3h-1zM436 100h1v5h-1zM446 102h1v3h-1zM456 100h1v5h-1zM466 102h1v3h-1zM476 93h1v12h-1zM486 102h1v3h-1zM496 100h1v5h-1zM506 102h1v3h-1zM516 100h1v5h-1zM526 102h1v3h-1zM536 100h1v5h-1zM546 102h1v3h-1zM556 100h1v5h-1zM566 102h1v3h-1zM576 93h1v12h-1zM586 102h1v3h-1zM596 100h1v5h-1zM606 102h1v3h-1zM616 100h1v5h-1zM626 102h1v3h-1zM636 100h1v5h-1zM646 102h1v3h-1zM656 100h1v5h-1zM666 102h1v3h-1zM676 93h1v12h-1zM686 102h1v3h-1zM696 100h1v5h-1zM706 102h1v3h-1zM716 100h1v5h-1zM726 102h1v3h-1zM736 100h1v5h-1zM746 102h1v3h-1zM756 100h1v5h-1zM766 102h1v3h-1zM776 93h1v12h-1zM786 102h1v3h-1zM796 100h1v5h-1zM806 102h1v3h-1zM816 100h1v5h-1zM826 102h1v3h-1zM836 100h1v5h-1zM846 102h1v3h-1zM856 100h1v5h-1zM866 102h1v3h-1zM876 93h1v12h-1zM886 102h1v3h-1zM896 100h1v5h-1zM906 102h1v3h-1zM916 100h1v5h-1zM926 102h1v3h-1zM936 100h1v5h-1zM946 102h1v3h-1zM956 100h1v5h-1zM966 102h1v3h-1zM976 93h1v12h-1zM986 102h1v3h-1zM996 100h1v5h-1zM1006 102h1v3h-1zM1016 100h1v5h-1zM1026 102h1v3h-1zM1036 100h1v5h-1zM1046 102h1v3h-1zM1056 100h1v5h-1zM1066 102h1v3h-1zM1076 93h1v12h-1zM1086 102h1v3h-1zM1096 100h1v5h-1zM1106 102h1v3h-1zM1116 100h1v5h-1zM1126 102h1v3h-1zM1136 100h1v5h-1zM206 113h3v1h-3zM204 123h5v1h-5zM206 133h3v1h-3zM197 143h12v1h-12zM206 153h3v1h-3zM204 163h5v1h-5zM206 173h3v1h-3zM204 183h5v1h-5zM206 193h3v1h-3zM204 203h5v1h-5zM206 213h3v1h-3zM204 223h5v1h-5zM206 233h3v1h-3zM197 243h12v1h-12zM206 253h3v1h-3zM204 263h5v1h-5zM206 273h3v1h-3zM204 283h5v1h-5zM206 293h3v1h-3zM204 303h5v1h-5zM206 313h3v1h-3zM204 323h5v1h-5zM206 333h3v1h-3zM197 343h12v1h-12zM206 353h3v1h-3zM204 363h5v1h-5zM206 373h3v1h-3zM204 383h5v1h-5zM206 393h3v1h-3zM204 403h5v1h-5zM206 413h3v1h-3zM204 423h5v1h-5zM206 433h3v1h-3zM197 443h12v1h-12zM206 453h3v1h-3zM204 463h5v1h-5zM206 473h3v1h-3zM204 483h5v1h-5zM206 493h3v1h-3zM204 503h5v1h-5zM206 513h3v1h-3zM204 523h5v1h-5zM206 533h3v1h-3zM197 543h12v1h-12zM206 553h3v1h-3zM204 563h5v1h-5zM206 573h3v1h-3zM204 583h5v1h-5zM206 593h3v1h-3zM204 603h5v1h-5zM206 613h3v1h-3zM204 623h5v1h-5zM206 633h3v1h-3zM197 643h12v1h-12zM206 653h3v1h-3zM204 663h5v1h-5zM206 673h3v1h-3z"/>
<g font-family="Liberation Sans" font-size="9.5" fill="#dcdcdc"><text x="278" y="101">0</text><text x="378" y="101">100</text><text x="478" y="101">200</text><text x="578" y="101">300</text><text x="678" y="101">400</text><text x="778" y="101">500</text><text x="878" y="101">600</text><text x="978" y="101">700</text><text x="1078" y="101">800</text><text x="197" y="152">0</text><text x="197" y="252">1</text><text x="197" y="261">0</text><text x="197" y="270">0</text><text x="197" y="352">2</text><text x="197" y="361">0</text><text x="197" y="370">0</text><text x="197" y="452">3</text><text x="197" y="461">0</text><text x="197" y="470">0</text><text x="197" y="552">4</text><text x="197" y="561">0</text><text x="197" y="570">0</text><text x="197" y="652">5</text><text x="197" y="661">0</text><text x="197" y="670">0</text></g>
</svg>
<!-- ============ RIGHT DOCK ============ -->
<div class="a" style="left:1163px;top:70px;width:1px;height:657px;background:#555"></div>

<!-- top tabs -->
<div class="a" style="left:1163px;top:51px;width:82px;height:19px;background:#2c2c2c"></div>
<div class="a" style="left:1245px;top:49px;width:21px;height:22px;background:#454545;border:1px solid #555;border-bottom:none"></div>
<div class="a" style="left:1185px;top:51px;width:1px;height:19px;background:#3e3e3e"></div>
<div class="a" style="left:1206px;top:51px;width:1px;height:19px;background:#3e3e3e"></div>
<div class="a" style="left:1227px;top:51px;width:1px;height:19px;background:#3e3e3e"></div>
<div class="a" style="left:1166px;top:53px;width:16px;height:15px;border:1px solid #111;background:radial-gradient(circle,#000 0,#222 1.5px,#999 4px,#fff 7px)"></div>
<div class="a" style="left:1188px;top:53px;width:15px;height:15px;border:1px solid #111;background:#e9b143;border-left:3px solid #b03030"></div>
<div class="a" style="left:1193px;top:56px;width:7px;height:9px;background-image:radial-gradient(circle,#fff6c0 0.8px,transparent 1px);background-size:3px 3px"></div>
<div class="a" style="left:1209px;top:53px;width:15px;height:15px;background:#fff;border:1px solid #111;overflow:hidden"></div>
<div class="t" style="left:1210px;top:55px;font-size:11px;font-weight:bold;font-style:italic;color:#000;letter-spacing:-0.5px">Aa</div>
<div class="a" style="left:1230px;top:56px;width:14px;height:9px;background:#1abc9c;border:1px solid #111"></div>
<svg class="a" style="left:1248px;top:52px" width="16" height="16"><rect x="1.5" y="3.5" width="13" height="9" fill="none" stroke="#bbb" stroke-width="1.4"/><path d="M3 14 L4 12 M13 14 L12 12 M6 3 L8 1 L10 3" fill="none" stroke="#bbb" stroke-width="1.2"/></svg>
<div class="a" style="left:1351px;top:55px;width:10px;height:10px;border:1px solid #bbb"></div>
<svg class="a" style="left:1351px;top:55px" width="10" height="10"><path d="M7.5 2 V8 L2.5 5Z" fill="#bbb"/></svg>
<div class="a" style="left:1164px;top:70px;width:202px;height:1px;background:#555"></div>
<div class="t" style="left:1166px;top:75.00px;font-size:11.1px;color:#dcdcdc;font-weight:bold">GEGL Operation</div>
<div class="a" style="left:1166px;top:87px;width:197px;height:250px;background:#4a4a4a"></div>
<div class="a" style="left:1166px;top:87px;width:197px;height:18px;background:#3e3e3e"></div>
<div class="a" style="left:1168px;top:90px;width:13px;height:13px;background:#1a1a1a;border-radius:3px"></div>
<svg class="a" style="left:1168px;top:90px" width="13" height="13"><path d="M3.5 3.5 L9.5 9.5 M9.5 3.5 L3.5 9.5" stroke="#fff" stroke-width="2.2"/></svg>
<div class="t" style="left:1185px;top:92.41px;font-size:10.5px;color:#9a98aa">Sample average</div>
<div class="a" style="left:1178px;top:108px;width:185px;height:30px;background:#333;border:1px solid #8a8a8a"></div>
<div class="t" style="left:1179px;top:118.61px;font-size:10.5px;color:#dcdcdc">Radius</div>
<div class="t" style="left:1343px;top:118.61px;font-size:10.5px;color:#dcdcdc">3</div>
<div class="a" style="left:1352px;top:110px;width:10px;height:26px;background:#3a3a3a"></div>
<svg class="a" style="left:1352px;top:110px" width="10" height="26"><path d="M1.5 7 L5 3.5 L8.5 7 M1.5 19 L5 22.5 L8.5 19" fill="none" stroke="#ccc" stroke-width="1.4"/></svg>
<div class="a" style="left:1164px;top:337px;width:200px;height:26px;background:#3c3c3c"></div>
<svg class="a" style="left:1164px;top:337px" width="200" height="26">
<g fill="#bbb"><path d="M24 5 V11 M21 9 L24 12 L27 9" stroke="#bbb" stroke-width="1.5" fill="none"/><rect x="19" y="13" width="10" height="4"/></g>
<path d="M69 9 A5 5 0 1 0 74 7" fill="none" stroke="#bbb" stroke-width="1.8"/><path d="M68 5 L72 8 L67 10Z" fill="#bbb"/>
<rect x="118" y="6" width="12" height="12" fill="#999"/><path d="M120 8 L128 16 M128 8 L120 16" stroke="#333" stroke-width="2"/>
<path d="M169 8 A5 5 0 1 1 170 15" fill="none" stroke="#bbb" stroke-width="1.8"/><path d="M166 6 L170 9 L166 11Z" fill="#bbb"/><circle cx="170" cy="17" r="2" fill="#bbb"/>
</svg>
<div class="a" style="left:1164px;top:363px;width:202px;height:1px;background:#555"></div>
<div class="a" style="left:1256px;top:365px;width:3px;height:2px;background:#999"></div>
<div class="a" style="left:1263px;top:365px;width:3px;height:2px;background:#999"></div>
<div class="a" style="left:1270px;top:365px;width:3px;height:2px;background:#999"></div>
<!-- layers tabs -->
<div class="a" style="left:1161px;top:379px;width:2px;height:4px;background:#aaa"></div><div class="a" style="left:1161px;top:386px;width:2px;height:4px;background:#aaa"></div><div class="a" style="left:1161px;top:393px;width:2px;height:4px;background:#aaa"></div>
<div class="a" style="left:1218px;top:370px;width:112px;height:18px;background:#2c2c2c"></div>
<div class="a" style="left:1164px;top:367px;width:54px;height:21px;background:#454545;border:1px solid #555;border-bottom:none"></div>
<svg class="a" style="left:1166px;top:370px" width="16" height="16"><path d="M3 1 H15 L13 4 H1Z M3 6 H15 L13 9 H1Z M3 11 H15 L13 14 H1Z" fill="#bbb"/></svg>
<div class="t" style="left:1180px;top:373.93px;font-size:10.6px;color:#dcdcdc">Layers</div>
<div class="a" style="left:1219px;top:372px;width:12px;height:13px;border:1px solid #aaa"></div>
<div class="a" style="left:1222px;top:374px;width:1px;height:9px;background:#999"></div><div class="a" style="left:1225px;top:374px;width:1px;height:9px;background:#999"></div>
<div class="t" style="left:1233px;top:374.10px;font-size:10.4px;color:#dcdcdc">Channels</div>
<svg class="a" style="left:1284px;top:372px" width="14" height="12"><path d="M1 2 H13 M3 2 V4 M11 2 V4 M2 11 Q7 3 12 11" fill="none" stroke="#bbb" stroke-width="1.6"/></svg>
<div class="t" style="left:1298px;top:374.10px;font-size:10.4px;color:#dcdcdc">Paths</div>
<div class="a" style="left:1351px;top:373px;width:10px;height:10px;border:1px solid #bbb"></div>
<svg class="a" style="left:1351px;top:373px" width="10" height="10"><path d="M7.5 2 V8 L2.5 5Z" fill="#bbb"/></svg>
<div class="a" style="left:1164px;top:388px;width:202px;height:1px;background:#555"></div>
<!-- mode -->
<div class="btn" style="left:1166px;top:391px;width:153px;height:27px;background:#2e2e2e"></div>
<div class="t" style="left:1172px;top:400.61px;font-size:10.5px;color:#dcdcdc">Mode</div>
<div class="t" style="left:1259px;top:400.78px;font-size:10.3px;color:#dcdcdc">Normal</div>
<svg class="a" style="left:1299px;top:399px" width="14" height="10"><path d="M1.5 2 L7 7.5 L12.5 2" fill="none" stroke="#e0e0e0" stroke-width="1.7"/></svg>
<div class="btn" style="left:1320px;top:391px;width:43px;height:27px;background:#2e2e2e"></div>
<svg class="a" style="left:1324px;top:396px" width="16" height="16"><path d="M5 6 A5 5 0 1 1 6 12" fill="none" stroke="#ccc" stroke-width="1.6"/><path d="M2 4 L6 7 L2 9Z" fill="#ccc"/><circle cx="6" cy="13" r="2" fill="#ccc"/></svg>
<svg class="a" style="left:1343px;top:399px" width="14" height="10"><path d="M1.5 2 L7 7.5 L12.5 2" fill="none" stroke="#e0e0e0" stroke-width="1.7"/></svg>
<!-- opacity -->
<div class="a" style="left:1166px;top:419px;width:197px;height:30px;background:#595959;border:1px solid #8a8a8a"></div>
<div class="a" style="left:1350px;top:420px;width:12px;height:28px;background:#3a3a3a;border-left:1px solid #111"></div>
<svg class="a" style="left:1351px;top:420px" width="11" height="28"><path d="M2 8 L5.5 4.5 L9 8" fill="none" stroke="#777" stroke-width="1.4"/><path d="M2 20 L5.5 23.5 L9 20" fill="none" stroke="#ddd" stroke-width="1.4"/></svg>
<div class="t" style="left:1167px;top:429.36px;font-size:10.8px;color:#dcdcdc">Opacity</div>
<div class="t" style="left:1321.5px;top:429.53px;font-size:10.6px;color:#dcdcdc">100,0</div>
<!-- lock -->
<div class="t" style="left:1165px;top:457.68px;font-size:10.3px;color:#dcdcdc">Lock:</div>
<svg class="a" style="left:1196px;top:454px" width="16" height="16"><path d="M14 1 L6 10 L8 12Z" fill="#bbb"/><path d="M5 11 Q2 12 2 15 Q5 15 7 13Z" fill="#bbb"/></svg>
<svg class="a" style="left:1220px;top:454px" width="15" height="15"><path d="M7.5 1 V14 M1 7.5 H14" stroke="#bbb" stroke-width="1.5"/><path d="M7.5 0 L10 3 H5Z M7.5 15 L10 12 H5Z M0 7.5 L3 5 V10Z M15 7.5 L12 5 V10Z" fill="#bbb"/></svg>
<div class="a chk" style="left:1245px;top:455px;width:13px;height:13px;background-size:6px 6px;background-position:0 0,3px 3px"></div>
<!-- layers list -->
<div class="a" style="left:1166px;top:474px;width:197px;height:227px;background:#303030;border-radius:0 0 3px 3px"></div>
<div class="a" style="left:1167px;top:474px;width:195px;height:29px;background:#1f1f1f"></div>
<svg class="a" style="left:1170px;top:480px" width="22" height="16"><path d="M1 8 Q11 -2 21 8 Q11 18 1 8Z" fill="none" stroke="#ccc" stroke-width="1.8"/><circle cx="11" cy="8" r="3.2" fill="none" stroke="#ccc" stroke-width="1.8"/></svg>
<svg class="a" style="left:1170px;top:508px" width="22" height="16"><path d="M1 8 Q11 -2 21 8 Q11 18 1 8Z" fill="none" stroke="#ccc" stroke-width="1.8"/><circle cx="11" cy="8" r="3.2" fill="none" stroke="#ccc" stroke-width="1.8"/></svg>
<div class="a chk" style="left:1242px;top:477px;width:36px;height:24px;border:2px solid #fff;background-size:8px 8px"></div>
<div class="t" style="left:1281px;top:484.61px;font-size:10.5px;color:#dcdcdc">Long Shadow</div>
<div class="a" style="left:1242px;top:505px;width:36px;height:24px;border:2px solid #000;background:#1abc9c"></div>
<div class="t" style="left:1282px;top:511.67px;font-size:11.5px;color:#dcdcdc;font-weight:bold">Background</div>
<!-- bottom buttons -->
<svg class="a" style="left:1164px;top:702px" width="202" height="24">
<g fill="none" stroke="#bbb" stroke-width="1.5"><path d="M9 8 V19 H19 V9 L16 6 H12"/><path d="M11 3 V9 M8 6 H14"/></g>
<path d="M30 6 H35 L37 8 H44 V19 H30Z" fill="#bbb"/><path d="M37 11 V17 M34 14 H40" stroke="#333" stroke-width="2"/>
<path d="M55 15 L61 9 L67 15" fill="none" stroke="#ccc" stroke-width="1.8"/>
<path d="M79 9 L85 15 L91 9" fill="none" stroke="#ccc" stroke-width="1.8"/>
<g fill="none" stroke="#bbb" stroke-width="1.2"><rect x="103" y="6.5" width="8" height="6"/><path d="M105 15 H114 V9"/></g>
<g fill="none" stroke="#bbb" stroke-width="1.3"><circle cx="133" cy="5" r="1.8"/><path d="M133 7 V19 M127 14 Q128 19 133 19 Q138 19 139 14 M130 10 H136"/></g>
<path d="M154 17 L158 13 H170 L166 19 H154Z" fill="#bbb"/><path d="M159 4 H167 V9 Q167 12 163 12 Q159 12 159 9Z" fill="#bbb"/><rect x="160.5" y="6" width="1.5" height="1.2" fill="#333"/><rect x="164" y="6" width="1.5" height="1.2" fill="#333"/>
<rect x="178" y="6" width="13" height="13" fill="#bbb"/><path d="M181 9 L188 16 M188 9 L181 16" stroke="#333" stroke-width="2.2"/>
</svg>

<!-- ============ LONG SHADOW DIALOG ============ -->
<div class="a" style="left:247px;top:33px;width:372px;height:351px;background:#454545;border:1px solid #5a5a5a;box-shadow:0 0 8px rgba(0,0,0,0.35)"></div>
<div class="a" style="left:248px;top:33px;width:370px;height:30px;background:#fff"></div>
<svg class="a" style="left:256px;top:40px" width="17" height="16" viewBox="0 0 24 23" preserveAspectRatio="none"><rect x="0" y="8" width="24" height="15" fill="#1abc9c"/><path d="M6 8.5 Q7.5 6 10 6 Q11 1.5 16 2 Q21 2 23.5 0 L24 1 V11 Q23 14 20 13.5 L23.5 18 L20 17 Q15 14.5 11 12.5 Q7 12 6 8.5Z" fill="#c4c4c4"/><circle cx="14.5" cy="7" r="2.2" fill="#fff"/><circle cx="19.5" cy="7" r="2.2" fill="#fff"/><rect x="6" y="14" width="9" height="1.2" fill="#e8f6f2"/></svg>
<div class="t" style="left:277px;top:42.78px;font-size:11.6px;color:#8a8a8a">Long Shadow</div>
<svg class="a" style="left:597px;top:42px" width="11" height="11"><path d="M0.5 0.5 L10.5 10.5 M10.5 0.5 L0.5 10.5" stroke="#555" stroke-width="1"/></svg>
<div class="a" style="left:249px;top:63px;width:368px;height:38px;background:#3e3e3e;border:1px solid #333"></div>
<svg class="a" style="left:252px;top:67px" width="23" height="23" viewBox="0 0 23 23"><circle cx="11.5" cy="11" r="11" fill="#c2c2c2"/><path d="M24 6.5 H11 A4.6 4.6 0 0 0 6.6 11.3 A4.3 4.3 0 0 0 11 15.2 A3.6 3.6 0 0 0 14.6 12.3" fill="none" stroke="#3e3e3e" stroke-width="3.1" stroke-linecap="round"/><rect x="20" y="4.5" width="5" height="4" fill="#3e3e3e"/></svg>
<div class="t" style="left:281px;top:68.80px;font-size:16.3px;color:#e6e6e6;font-weight:bold">Long Shadow</div>
<div class="t" style="left:281px;top:87.34px;font-size:10.7px;color:#dcdcdc">Long Shadow-5 ([cara membuat long shadow di gimp] (exp...</div>
<div class="a" style="left:579px;top:71px;width:34px;height:22px;border:1px solid #111;background-color:#777;background-image:linear-gradient(45deg,#999 25%,transparent 25%,transparent 75%,#999 75%),linear-gradient(45deg,#999 25%,transparent 25%,transparent 75%,#999 75%);background-size:8px 8px;background-position:0 0,4px 4px"></div>
<div class="t" style="left:254px;top:117.10px;font-size:12.4px;color:#dcdcdc">Presets:</div>
<div class="a" style="left:307px;top:107px;width:257px;height:30px;background:#2e2e2e;border:1px solid #1f1f1f;border-radius:4px"></div>
<div class="a" style="left:254px;top:143px;width:140px;height:30px;background:#2e2e2e;border:1px solid #1f1f1f;border-radius:4px"></div>
<div class="t" style="left:261px;top:153.30px;font-size:12.4px;color:#dcdcdc">Style</div>
<div class="a" style="left:254px;top:175px;width:140px;height:36px;background:#595959;border:1px solid #7c7c7c"></div>
<div class="t" style="left:256px;top:188.00px;font-size:12.4px;color:#dcdcdc">Angle</div>
<div class="a" style="left:254px;top:213px;width:140px;height:36px;background:#333;border:1px solid #7c7c7c"></div>
<div class="a" style="left:255px;top:214px;width:32px;height:34px;background:#595959;border-right:1px solid #111"></div>
<div class="t" style="left:256px;top:225.70px;font-size:12.4px;color:#dcdcdc">Midpoint</div>
<div class="t" style="left:254px;top:262.10px;font-size:12.4px;color:#dcdcdc">Color</div>
<div class="a" style="left:288px;top:251px;width:106px;height:32px;background:#2e2e2e;border:1px solid #1f1f1f;border-radius:4px"></div>
<div class="a" style="left:292px;top:254px;width:100px;height:25px;background:#000"></div>
<svg class="a" style="left:292px;top:254px" width="100" height="25"><defs><pattern id="ck1" width="8" height="8" patternUnits="userSpaceOnUse"><rect width="8" height="8" fill="#666"/><rect width="4" height="4" fill="#999"/><rect x="4" y="4" width="4" height="4" fill="#999"/></pattern></defs><path d="M20 25 L100 13 V25Z" fill="url(#ck1)"/></svg>
<div class="a" style="left:254px;top:285px;width:140px;height:30px;background:#2e2e2e;border:1px solid #1f1f1f;border-radius:4px"></div>
<div class="t" style="left:261px;top:295.10px;font-size:12.4px;color:#dcdcdc">Composition</div>
<div class="a" style="left:256px;top:323px;width:13px;height:13px;background:#1a1a1a;border-radius:3px"></div>
<svg class="a" style="left:256px;top:323px" width="13" height="13"><path d="M3.5 3.5 L9.5 9.5 M9.5 3.5 L3.5 9.5" stroke="#fff" stroke-width="2.2"/></svg>
<div class="t" style="left:273px;top:324.20px;font-size:12.4px;color:#9a9a9a">Preview</div>
<div class="a" style="left:254px;top:350px;width:85px;height:27px;background:#2e2e2e;border:1px solid #1f1f1f;border-radius:4px"></div>
<div class="t" style="left:284px;top:358.20px;font-size:12.4px;color:#dcdcdc">Help</div>
<div class="a" style="left:345px;top:350px;width:85px;height:27px;background:#2e2e2e;border:1px solid #1f1f1f;border-radius:4px"></div>
<div class="t" style="left:371px;top:358.20px;font-size:12.4px;color:#dcdcdc">R</div>
<!-- ============ COLOR DIALOG ============ -->
<div class="a" style="left:380px;top:116px;width:404px;height:400px;background:#454545;border:1px solid #2a8ad4;box-shadow:0 3px 12px rgba(0,0,0,0.4)"></div>
<div class="a" style="left:381px;top:117px;width:402px;height:30px;background:#fff"></div>
<svg class="a" style="left:389px;top:124px" width="17" height="15" viewBox="0 0 17 15"><path d="M0.5 7.5 Q2 5.5 5 5.5 Q6.5 2.5 10 2.5 L14.5 0.3 L15.5 1 L14.5 5 Q15.5 9 13.5 10.5 L15.5 14 L12 12.5 Q9 12 7 10.5 Q3 10.5 0.5 7.5Z" fill="#b4b4b4"/><circle cx="9.3" cy="6.3" r="1.7" fill="#fff"/><circle cx="12.3" cy="6.3" r="1.7" fill="#fff"/><circle cx="9.6" cy="6.5" r="0.8" fill="#333"/><circle cx="12.6" cy="6.5" r="0.8" fill="#333"/></svg>
<div class="t" style="left:410px;top:126.24px;font-size:12px;color:#000">Color</div>
<svg class="a" style="left:762px;top:125px" width="12" height="12"><path d="M0.5 0.5 L11.5 11.5 M11.5 0.5 L0.5 11.5" stroke="#111" stroke-width="1.2"/></svg>
<div class="a" style="left:394px;top:161px;width:95px;height:18px;background:#2c2c2c"></div>
<div class="a" style="left:394px;top:160px;width:20px;height:19px;background:#454545;border:1px solid #555;border-bottom:none"></div>
<div class="a" style="left:396px;top:162px;width:16px;height:15px;border:1px dotted #ccc"></div>
<svg class="a" style="left:397px;top:163px" width="14" height="13"><path d="M1 6 Q3 4 5 4 L8 3 L12 1 V7 Q11 9 9 9 L11 12 Q7 10 5 9 Q2 9 1 6Z" fill="#b8b8b8"/></svg>
<div class="a" style="left:416px;top:164px;width:13px;height:13px;background:#9a9a9a;border:1px solid #ccc"></div>
<div class="a" style="left:419px;top:166px;width:3px;height:9px;background:#444"></div><div class="a" style="left:424px;top:166px;width:3px;height:9px;background:#5b7"></div>
<svg class="a" style="left:434px;top:164px" width="14" height="14"><circle cx="7" cy="7" r="6" fill="#3a3a3a" stroke="#aaa" stroke-width="1.3"/><circle cx="7" cy="7" r="3" fill="none" stroke="#888" stroke-width="1"/></svg>
<svg class="a" style="left:453px;top:164px" width="14" height="14"><circle cx="7" cy="7" r="6" fill="none" stroke="#aaa" stroke-width="1.2"/><path d="M5 3.5 L11 7 L5 10.5Z" fill="#555" stroke="#aaa" stroke-width="1"/></svg>
<svg class="a" style="left:472px;top:163px" width="15" height="15"><path d="M7 1 Q13 1 14 6 Q14 9 11 9 Q9 9 10 11 Q10 14 7 14 Q1 14 1 8 Q1 1 7 1Z" fill="#c8c8c8"/><circle cx="5" cy="5" r="1.3" fill="#333"/><circle cx="4.5" cy="9" r="1.3" fill="#333"/><circle cx="8" cy="11" r="1.2" fill="#333"/><circle cx="9" cy="4" r="1.2" fill="#333"/></svg>
<div class="a" style="left:394px;top:178px;width:180px;height:234px;border:1px solid #555;background:#3a3a3a"></div>
<div class="a" style="left:396px;top:180px;width:151px;height:228px;border:1px solid #999;background:#f00"></div>
<div class="a" style="left:397px;top:181px;width:149px;height:226px;background:linear-gradient(to bottom,rgba(0,0,0,0) 0%,rgba(0,0,0,0.2) 25%,rgba(0,0,0,0.42) 50%,rgba(0,0,0,0.7) 75%,rgba(0,0,0,0.88) 90%,#000 100%),linear-gradient(to right,#fff 0%,rgba(255,255,255,0.45) 35%,rgba(255,255,255,0) 100%)"></div>
<div class="a" style="left:551px;top:180px;width:17px;height:228px;background:#222"></div>
<div class="a" style="left:552px;top:181px;width:15px;height:226px;background:linear-gradient(to bottom,#f00 3%,#f0f 16%,#00f 34%,#0ff 52%,#0f0 68%,#ff0 85%,#f00 100%)"></div>
<div class="a" style="left:552px;top:406px;width:15px;height:1px;background:#fff"></div>
<div class="t" style="left:393px;top:420.46px;font-size:12.8px;color:#dcdcdc">Current:</div>
<div class="t" style="left:417px;top:437.42px;font-size:12.5px;color:#dcdcdc">Old:</div>
<svg class="a" style="left:448px;top:419px" width="126" height="33"><defs><pattern id="ck2" width="8" height="8" patternUnits="userSpaceOnUse"><rect width="8" height="8" fill="#666"/><rect width="4" height="4" fill="#8a8a8a"/><rect x="4" y="4" width="4" height="4" fill="#8a8a8a"/></pattern></defs><rect width="126" height="33" fill="#000"/><path d="M10 16 L126 1 V16Z" fill="url(#ck2)"/><path d="M10 33 L126 17 V33Z" fill="url(#ck2)"/></svg>
<div class="btn" style="left:580px;top:159px;width:44px;height:24px;background:#2e2e2e"></div>
<div class="t" style="left:584px;top:165.43px;font-size:12.6px;color:#a8a8a8">0..100</div>
<div class="btn" style="left:628px;top:159px;width:44px;height:24px;background:#2e2e2e"></div>
<div class="t" style="left:632px;top:165.18px;font-size:12.9px;color:#e0e0e0">0..255</div>
<div class="btn" style="left:706px;top:159px;width:29px;height:24px;background:#2e2e2e"></div>
<div class="t" style="left:710px;top:166.45px;font-size:11.4px;color:#a8a8a8">LCh</div>
<div class="btn" style="left:739px;top:159px;width:32px;height:24px;background:#2e2e2e"></div>
<div class="t" style="left:742px;top:166.20px;font-size:11.7px;color:#e0e0e0">HSV</div>
<div class="a" style="left:582px;top:193px;width:13px;height:13px;border-radius:50%;background:#141414"></div>
<div class="a" style="left:585px;top:196px;width:7px;height:7px;border-radius:50%;background:#fff;border:1px solid #141414"></div>
<div class="t" style="left:597px;top:195.10px;font-size:12.4px;color:#dcdcdc">R</div>
<div class="a" style="left:607px;top:192px;width:91px;height:15px;background:#222"></div>
<div class="a" style="left:611px;top:193px;width:83px;height:13px;background:linear-gradient(to right,#000,#f00)"></div>
<div class="a" style="left:608px;top:193px;width:3px;height:13px;background:#111"></div>
<svg class="a" style="left:606px;top:201px" width="12" height="7"><path d="M6 0.5 L11.5 6.5 H0.5Z" fill="#fff"/></svg>
<div class="a" style="left:700px;top:189px;width:71px;height:24px;background:#222;border:1px solid #3a3a3a"></div>
<div class="t" style="left:704px;top:195.02px;font-size:12.5px;color:#e6e6e6">0,0</div>
<div class="a" style="left:757px;top:190px;width:13px;height:22px;background:#2a2a2a"></div>
<svg class="a" style="left:758px;top:192px" width="11" height="19"><path d="M1.5 6 L5.5 2 L9.5 6Z" fill="#dcdcdc"/><path d="M1.5 13 L5.5 17 L9.5 13Z" fill="#dcdcdc"/></svg>
<div class="a" style="left:582px;top:218px;width:13px;height:13px;border-radius:50%;background:#141414"></div>
<div class="t" style="left:597px;top:220.10px;font-size:12.4px;color:#dcdcdc">G</div>
<div class="a" style="left:607px;top:217px;width:91px;height:15px;background:#222"></div>
<div class="a" style="left:611px;top:218px;width:83px;height:13px;background:linear-gradient(to right,#000,#0f0)"></div>
<div class="a" style="left:608px;top:218px;width:3px;height:13px;background:#111"></div>
<svg class="a" style="left:606px;top:226px" width="12" height="7"><path d="M6 0.5 L11.5 6.5 H0.5Z" fill="#fff"/></svg>
<div class="a" style="left:700px;top:214px;width:71px;height:24px;background:#222;border:1px solid #3a3a3a"></div>
<div class="t" style="left:704px;top:220.02px;font-size:12.5px;color:#e6e6e6">0,0</div>
<div class="a" style="left:757px;top:215px;width:13px;height:22px;background:#2a2a2a"></div>
<svg class="a" style="left:758px;top:217px" width="11" height="19"><path d="M1.5 6 L5.5 2 L9.5 6Z" fill="#dcdcdc"/><path d="M1.5 13 L5.5 17 L9.5 13Z" fill="#dcdcdc"/></svg>
<div class="a" style="left:582px;top:243px;width:13px;height:13px;border-radius:50%;background:#141414"></div>
<div class="t" style="left:597px;top:245.10px;font-size:12.4px;color:#dcdcdc">B</div>
<div class="a" style="left:607px;top:242px;width:91px;height:15px;background:#222"></div>
<div class="a" style="left:611px;top:243px;width:83px;height:13px;background:linear-gradient(to right,#000,#00f)"></div>
<div class="a" style="left:608px;top:243px;width:3px;height:13px;background:#111"></div>
<svg class="a" style="left:606px;top:251px" width="12" height="7"><path d="M6 0.5 L11.5 6.5 H0.5Z" fill="#fff"/></svg>
<div class="a" style="left:700px;top:239px;width:71px;height:24px;background:#222;border:1px solid #3a3a3a"></div>
<div class="t" style="left:704px;top:245.02px;font-size:12.5px;color:#e6e6e6">0,0</div>
<div class="a" style="left:757px;top:240px;width:13px;height:22px;background:#2a2a2a"></div>
<svg class="a" style="left:758px;top:242px" width="11" height="19"><path d="M1.5 6 L5.5 2 L9.5 6Z" fill="#dcdcdc"/><path d="M1.5 13 L5.5 17 L9.5 13Z" fill="#dcdcdc"/></svg>
<div class="a" style="left:582px;top:272px;width:13px;height:13px;border-radius:50%;background:#141414"></div>
<div class="t" style="left:597px;top:274.10px;font-size:12.4px;color:#dcdcdc">L</div>
<div class="a" style="left:607px;top:271px;width:91px;height:15px;background:#222"></div>
<div class="a" style="left:611px;top:272px;width:83px;height:13px;background:linear-gradient(to right,#000,#fff)"></div>
<div class="a" style="left:608px;top:272px;width:3px;height:13px;background:#111"></div>
<svg class="a" style="left:606px;top:280px" width="12" height="7"><path d="M6 0.5 L11.5 6.5 H0.5Z" fill="#fff"/></svg>
<div class="a" style="left:700px;top:268px;width:71px;height:24px;background:#222;border:1px solid #3a3a3a"></div>
<div class="t" style="left:704px;top:274.02px;font-size:12.5px;color:#e6e6e6">0,0</div>
<div class="a" style="left:757px;top:269px;width:13px;height:22px;background:#2a2a2a"></div>
<svg class="a" style="left:758px;top:271px" width="11" height="19"><path d="M1.5 6 L5.5 2 L9.5 6Z" fill="#dcdcdc"/><path d="M1.5 13 L5.5 17 L9.5 13Z" fill="#5a5a5a"/></svg>
<div class="a" style="left:582px;top:297px;width:13px;height:13px;border-radius:50%;background:#141414"></div>
<div class="t" style="left:597px;top:299.10px;font-size:12.4px;color:#dcdcdc">C</div>
<div class="a" style="left:607px;top:296px;width:91px;height:15px;background:#222"></div>
<div class="a" style="left:611px;top:297px;width:83px;height:13px;background:#f0f"></div>
<div class="a" style="left:608px;top:297px;width:3px;height:13px;background:#111"></div>
<svg class="a" style="left:606px;top:305px" width="12" height="7"><path d="M6 0.5 L11.5 6.5 H0.5Z" fill="#fff"/></svg>
<div class="a" style="left:700px;top:293px;width:71px;height:24px;background:#222;border:1px solid #3a3a3a"></div>
<div class="t" style="left:704px;top:299.02px;font-size:12.5px;color:#e6e6e6">0,0</div>
<div class="a" style="left:757px;top:294px;width:13px;height:22px;background:#2a2a2a"></div>
<svg class="a" style="left:758px;top:296px" width="11" height="19"><path d="M1.5 6 L5.5 2 L9.5 6Z" fill="#dcdcdc"/><path d="M1.5 13 L5.5 17 L9.5 13Z" fill="#5a5a5a"/></svg>
<div class="a" style="left:582px;top:322px;width:13px;height:13px;border-radius:50%;background:#141414"></div>
<div class="t" style="left:597px;top:324.10px;font-size:12.4px;color:#dcdcdc">h</div>
<div class="a" style="left:607px;top:321px;width:91px;height:15px;background:#222"></div>
<div class="a" style="left:611px;top:322px;width:83px;height:13px;background:#000"></div>
<div class="a" style="left:608px;top:322px;width:3px;height:13px;background:#111"></div>
<svg class="a" style="left:606px;top:330px" width="12" height="7"><path d="M6 0.5 L11.5 6.5 H0.5Z" fill="#fff"/></svg>
<div class="a" style="left:700px;top:318px;width:71px;height:24px;background:#222;border:1px solid #3a3a3a"></div>
<div class="t" style="left:704px;top:324.02px;font-size:12.5px;color:#e6e6e6">0,0</div>
<div class="a" style="left:757px;top:319px;width:13px;height:22px;background:#2a2a2a"></div>
<svg class="a" style="left:758px;top:321px" width="11" height="19"><path d="M1.5 6 L5.5 2 L9.5 6Z" fill="#dcdcdc"/><path d="M1.5 13 L5.5 17 L9.5 13Z" fill="#5a5a5a"/></svg>
<div class="t" style="left:597px;top:353.30px;font-size:12.4px;color:#dcdcdc">A</div>
<div class="a" style="left:607px;top:350px;width:91px;height:15px;background:#222"></div>
<div class="a chk" style="left:611px;top:351px;width:83px;height:13px;background-color:#666;background-size:8px 8px"></div>
<div class="a" style="left:611px;top:351px;width:83px;height:13px;background:linear-gradient(to right,rgba(0,0,0,0),#000)"></div>
<svg class="a" style="left:621px;top:359px" width="12" height="7"><path d="M6 0.5 L11.5 6.5 H0.5Z" fill="#fff"/></svg>
<div class="a" style="left:700px;top:347px;width:71px;height:23px;background:#222;border:1px solid #3a3a3a"></div>
<div class="t" style="left:704px;top:352.96px;font-size:12.8px;color:#e6e6e6">20,0</div>
<div class="a" style="left:757px;top:348px;width:13px;height:21px;background:#2a2a2a"></div>
<svg class="a" style="left:758px;top:349px" width="11" height="19"><path d="M1.5 6 L5.5 2 L9.5 6Z" fill="#dcdcdc"/><path d="M1.5 13 L5.5 17 L9.5 13Z" fill="#dcdcdc"/></svg>
<div class="t" style="left:580px;top:384.82px;font-size:12.5px;color:#dcdcdc">HTML notation:</div>
<div class="a" style="left:673px;top:378px;width:64px;height:24px;background:#222;border:1px solid #3a3a3a"></div>
<div class="t" style="left:677px;top:384.90px;font-size:12.4px;color:#e6e6e6">000000</div>
<div class="btn" style="left:743px;top:376px;width:28px;height:28px;background:#2e2e2e"></div>
<svg class="a" style="left:747px;top:380px" width="20" height="20"><rect x="1.5" y="8" width="14" height="9" fill="none" stroke="#ccc" stroke-width="1.5"/><path d="M4 18 H13" stroke="#ccc" stroke-width="1.5"/><path d="M7 13 L14 6" stroke="#ccc" stroke-width="2"/><circle cx="15.5" cy="4.5" r="2.5" fill="#ccc"/></svg>
<div class="btn" style="left:580px;top:410px;width:23px;height:42px;background:#2e2e2e"></div>
<svg class="a" style="left:586px;top:424px" width="10" height="14"><path d="M2 1.5 L7.5 7 L2 12.5" fill="none" stroke="#e0e0e0" stroke-width="1.5"/></svg>
<div class="a" style="left:607px;top:410px;width:26px;height:20px;background:#333;border:1px solid #222;border-radius:3px"></div>
<div class="a" style="left:611px;top:413px;width:18px;height:14px;background:#1abc9c"></div>
<div class="a" style="left:634px;top:410px;width:26px;height:20px;background:#333;border:1px solid #222;border-radius:3px"></div>
<div class="a" style="left:638px;top:413px;width:18px;height:14px;background:#fff"></div>
<div class="a" style="left:661px;top:410px;width:26px;height:20px;background:#333;border:1px solid #222;border-radius:3px"></div>
<div class="a" style="left:665px;top:413px;width:18px;height:14px;background:#000"></div>
<div class="a" style="left:689px;top:410px;width:26px;height:20px;background:#333;border:1px solid #222;border-radius:3px"></div>
<div class="a" style="left:693px;top:413px;width:18px;height:14px;background:#000"></div>
<div class="a" style="left:717px;top:410px;width:26px;height:20px;background:#333;border:1px solid #222;border-radius:3px"></div>
<div class="a" style="left:721px;top:413px;width:18px;height:14px;background:#000"></div>
<div class="a" style="left:745px;top:410px;width:26px;height:20px;background:#333;border:1px solid #222;border-radius:3px"></div>
<div class="a" style="left:749px;top:413px;width:18px;height:14px;background:#000"></div>
<div class="a" style="left:607px;top:432px;width:26px;height:20px;background:#333;border:1px solid #222;border-radius:3px"></div>
<div class="a" style="left:611px;top:435px;width:18px;height:14px;background:#000"></div>
<div class="a" style="left:634px;top:432px;width:26px;height:20px;background:#333;border:1px solid #222;border-radius:3px"></div>
<div class="a" style="left:638px;top:435px;width:18px;height:14px;background:#000"></div>
<div class="a" style="left:661px;top:432px;width:26px;height:20px;background:#333;border:1px solid #222;border-radius:3px"></div>
<div class="a" style="left:665px;top:435px;width:18px;height:14px;background:#000"></div>
<div class="a" style="left:689px;top:432px;width:26px;height:20px;background:#333;border:1px solid #222;border-radius:3px"></div>
<div class="a" style="left:693px;top:435px;width:18px;height:14px;background:#000"></div>
<div class="a" style="left:717px;top:432px;width:26px;height:20px;background:#333;border:1px solid #222;border-radius:3px"></div>
<div class="a" style="left:721px;top:435px;width:18px;height:14px;background:#000"></div>
<div class="a" style="left:745px;top:432px;width:26px;height:20px;background:#333;border:1px solid #222;border-radius:3px"></div>
<div class="a" style="left:749px;top:435px;width:18px;height:14px;background:#000"></div>
<div class="btn" style="left:393px;top:476px;width:85px;height:27px;background:#2e2e2e"></div>
<div class="t" style="left:423px;top:484.26px;font-size:12.1px;color:#dcdcdc">Help</div>
<div class="btn" style="left:504px;top:476px;width:85px;height:27px;background:#2e2e2e"></div>
<div class="t" style="left:530px;top:484.26px;font-size:12.1px;color:#dcdcdc">Reset</div>
<div class="btn" style="left:595px;top:476px;width:85px;height:27px;background:#2e2e2e"></div>
<div class="t" style="left:629px;top:484.17px;font-size:12.2px;color:#dcdcdc">OK</div>
<div class="btn" style="left:686px;top:476px;width:85px;height:27px;background:#2e2e2e"></div>
<div class="t" style="left:709px;top:484.43px;font-size:11.9px;color:#dcdcdc">Cancel</div>
<!-- ============ TASKBAR ============ -->
<div class="a" style="left:0;top:727px;width:1366px;height:1px;background:#555"></div>
<div class="a" style="left:0;top:728px;width:1366px;height:40px;background:#0a0d15"></div>
<svg class="a" style="left:0;top:728px" width="1366" height="40" viewBox="0 728 1366 40">
<g fill="#fff"><path d="M16 741 L23 740 V747.5 H16Z M24 739.8 L32 738.6 V747.5 H24Z M16 748.5 H23 V756 L16 755Z M24 748.5 H32 V757.4 L24 756.2Z"/></g>
<circle cx="74" cy="745.5" r="5.5" fill="none" stroke="#fff" stroke-width="1.2"/><path d="M70 749.5 L64 756" stroke="#fff" stroke-width="1.3"/>
<g fill="none" stroke="#fff" stroke-width="1.3"><path d="M112 741 H124 M112 754 H124"/><rect x="113" y="744" width="10" height="7"/><path d="M127 741 V743 M127 745 V755"/></g>
<path d="M181 750 H166 Q166 755 172 756 Q177 756 181 754 V758 Q176 760 171 759 Q162 757 162 748 Q163 739 171 737 Q179 736 181 744 Q182 747 181 750Z M166 746 H176 Q175 741 171 741 Q167 741 166 746Z" fill="#1a8ee8"/>
<path d="M162 745 Q165 737 173 737 Q167 740 166 746Z" fill="#1a8ee8"/>
<rect x="209" y="741" width="22" height="16" rx="1" fill="#f4c963"/><path d="M209 741 H219 L221 743 H231 V745 H209Z" fill="#e0a93a"/><path d="M214 757 V750 L220 746 L226 750 V757 H223 V752 H217 V757Z" fill="#2b9ae8"/>
<rect x="200" y="766" width="40" height="2" fill="#76b9ed"/>
<rect x="257" y="742" width="23" height="17" rx="1.5" fill="#fff"/><path d="M263 742 Q263 736 268.5 736 Q274 736 274 742" fill="none" stroke="#fff" stroke-width="1.5"/>
<rect x="263" y="746" width="4.5" height="4.5" fill="#f35325"/><rect x="269" y="746" width="4.5" height="4.5" fill="#81bc06"/><rect x="263" y="752" width="4.5" height="4.5" fill="#05a6f0"/><rect x="269" y="752" width="4.5" height="4.5" fill="#ffba08"/>
<path d="M306 744 L318 738 L330 744 V757 H306Z" fill="#fff"/><path d="M306 744 L326 748 L318 751 L323 757 L306 744Z" fill="#0a0d15"/>
<rect x="343" y="728" width="44" height="40" fill="#343434"/>
<rect x="387" y="728" width="4" height="40" fill="#1c1c1c"/>

<rect x="343" y="766" width="44" height="2" fill="#76b9ed"/>
<path d="M405 748 Q405 738 417 739 Q427 741 426 747 Q424 750 420 749 Q417 750 419 754 Q418 759 411 758 Q405 756 405 748Z" fill="#dde6f2"/>
<circle cx="410" cy="749" r="1.8" fill="#e33"/><circle cx="412" cy="744" r="1.8" fill="#3a3"/><circle cx="417" cy="742" r="1.8" fill="#fc3"/><circle cx="413" cy="753" r="1.6" fill="#333"/>
<path d="M428 737 L418 759" stroke="#e8a33a" stroke-width="2"/>
<rect x="396" y="766" width="40" height="2" fill="#76b9ed"/>
<circle cx="464.5" cy="748.5" r="11.5" fill="#db4437"/><path d="M464.5 748.5 L453 748.5 A11.5 11.5 0 0 0 459 758.5Z" fill="#0f9d58"/><path d="M464.5 748.5 L476 748.5 A11.5 11.5 0 0 1 459 758.5Z" fill="#f4b400"/><circle cx="464.5" cy="748.5" r="5" fill="#fff"/><circle cx="464.5" cy="748.5" r="4" fill="#4285f4"/>
<rect x="445" y="766" width="40" height="2" fill="#76b9ed"/>
<g fill="none" stroke="#fff" stroke-width="1.2"><circle cx="1126" cy="743.5" r="2.6"/><path d="M1121 753 Q1121 747.5 1126 747.5 Q1131 747.5 1131 753"/><circle cx="1120" cy="746" r="2.4"/><path d="M1115 754 Q1115 750 1119 749.5"/></g>
<path d="M1153 751 L1159 745 L1165 751" fill="none" stroke="#fff" stroke-width="1.2"/>
<rect x="1176.5" y="744.5" width="13" height="8" fill="none" stroke="#fff" stroke-width="1.2"/><rect x="1178" y="746" width="8" height="5" fill="#fff"/><rect x="1190" y="746.5" width="1.5" height="4" fill="#fff"/>
<g fill="none" stroke="#fff" stroke-width="1.1"><rect x="1203.5" y="743.5" width="12" height="8"/><path d="M1209 752 V755 M1205 755 H1213"/><rect x="1199.5" y="742.5" width="3" height="3"/><path d="M1201 746 V753"/></g>
<path d="M1223 745 H1226 L1230 741.5 V754.5 L1226 751 H1223Z" fill="none" stroke="#fff" stroke-width="1.1"/>
<path d="M1232.5 745.5 Q1234 748 1232.5 750.5 M1235 743.5 Q1238 748 1235 752.5" fill="none" stroke="#fff" stroke-width="1.1"/>
<path d="M1237.5 741.5 Q1241 748 1237.5 754.5" fill="none" stroke="#777" stroke-width="1.1"/>
<path d="M1325.5 740.5 H1341.5 V752.5 H1336 L1333.5 755 L1331 752.5 H1325.5Z" fill="none" stroke="#fff" stroke-width="1.2"/>
<rect x="1360" y="728" width="1" height="40" fill="#3a3d45"/>
</svg>
<svg class="a" style="left:355px;top:737px" width="24" height="23" viewBox="0 0 24 23" preserveAspectRatio="none"><rect x="0" y="8" width="24" height="15" fill="#1abc9c"/><path d="M6 8.5 Q7.5 6 10 6 Q11 1.5 16 2 Q21 2 23.5 0 L24 1 V11 Q23 14 20 13.5 L23.5 18 L20 17 Q15 14.5 11 12.5 Q7 12 6 8.5Z" fill="#c4c4c4"/><circle cx="14.5" cy="7" r="2.2" fill="#ddd"/><circle cx="19.5" cy="7" r="2.2" fill="#ddd"/><circle cx="14.8" cy="7.2" r="1.1" fill="#222"/><circle cx="19.8" cy="7.2" r="1.1" fill="#222"/><rect x="6" y="14" width="9" height="1.2" fill="#e8f6f2"/></svg>
<div class="t" style="left:1267px;top:734.46px;font-size:10.8px;color:#fff">8:05</div>
<div class="t" style="left:1249px;top:751.78px;font-size:11.6px;color:#fff">30/03/2019</div>

</body></html>
